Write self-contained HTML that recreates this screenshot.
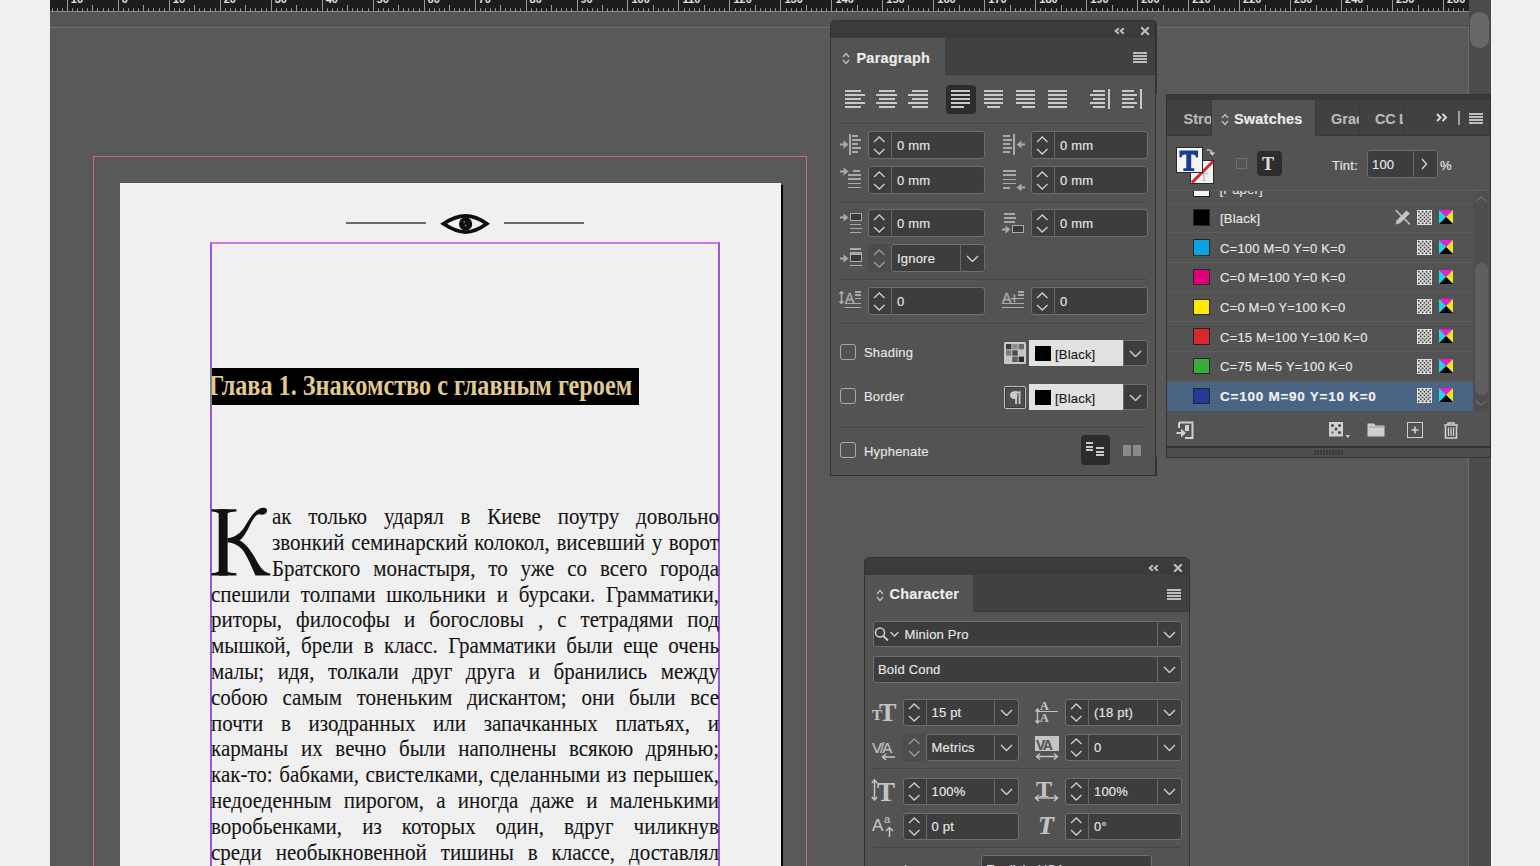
<!DOCTYPE html><html><head><meta charset="utf-8"><style>
*{box-sizing:border-box}
html,body{margin:0;padding:0}
body{width:1540px;height:866px;overflow:hidden;position:relative;background:#f0f0f0;font-family:"Liberation Sans",sans-serif;}
.a{position:absolute}
.fld{position:absolute;background:#3d3d3d;border:1px solid #6e6e6e;border-radius:3px}
.txt{position:absolute;color:#e6e6e6;font-size:12px;white-space:nowrap;line-height:1;letter-spacing:0.2px;-webkit-text-stroke:0.15px currentColor}
.sep{position:absolute;height:1px;background:#474747}
.bl{position:absolute;left:0;width:508px;font-family:"Liberation Serif",serif;font-size:21px;line-height:26px;color:#151515;text-align:justify;text-align-last:justify;white-space:nowrap;height:26px;transform-origin:0 20.08px;transform:scaleY(1.06);-webkit-text-stroke:0.1px #151515}
</style></head><body>
<div class="a" style="left:50px;top:0;width:1419px;height:12px;background:#1d1d1d;overflow:hidden">
<svg width="1419" height="12" style="position:absolute;left:0;top:0"><rect x="0" y="11" width="1419" height="1" fill="#8c8c8c"/><rect x="2" y="8.3" width="1" height="2.7" fill="#9a9a9a"/><rect x="7" y="8.3" width="1" height="2.7" fill="#9a9a9a"/><rect x="12" y="8.3" width="1" height="2.7" fill="#9a9a9a"/><rect x="17" y="0" width="1" height="11" fill="#9a9a9a"/><rect x="22" y="8.3" width="1" height="2.7" fill="#9a9a9a"/><rect x="27" y="8.3" width="1" height="2.7" fill="#9a9a9a"/><rect x="32" y="8.3" width="1" height="2.7" fill="#9a9a9a"/><rect x="37" y="8.3" width="1" height="2.7" fill="#9a9a9a"/><rect x="42" y="5" width="1" height="6" fill="#9a9a9a"/><rect x="47" y="8.3" width="1" height="2.7" fill="#9a9a9a"/><rect x="53" y="8.3" width="1" height="2.7" fill="#9a9a9a"/><rect x="58" y="8.3" width="1" height="2.7" fill="#9a9a9a"/><rect x="63" y="8.3" width="1" height="2.7" fill="#9a9a9a"/><rect x="68" y="0" width="1" height="11" fill="#9a9a9a"/><rect x="73" y="8.3" width="1" height="2.7" fill="#9a9a9a"/><rect x="78" y="8.3" width="1" height="2.7" fill="#9a9a9a"/><rect x="83" y="8.3" width="1" height="2.7" fill="#9a9a9a"/><rect x="88" y="8.3" width="1" height="2.7" fill="#9a9a9a"/><rect x="93" y="5" width="1" height="6" fill="#9a9a9a"/><rect x="98" y="8.3" width="1" height="2.7" fill="#9a9a9a"/><rect x="103" y="8.3" width="1" height="2.7" fill="#9a9a9a"/><rect x="109" y="8.3" width="1" height="2.7" fill="#9a9a9a"/><rect x="114" y="8.3" width="1" height="2.7" fill="#9a9a9a"/><rect x="119" y="0" width="1" height="11" fill="#9a9a9a"/><rect x="124" y="8.3" width="1" height="2.7" fill="#9a9a9a"/><rect x="129" y="8.3" width="1" height="2.7" fill="#9a9a9a"/><rect x="134" y="8.3" width="1" height="2.7" fill="#9a9a9a"/><rect x="139" y="8.3" width="1" height="2.7" fill="#9a9a9a"/><rect x="144" y="5" width="1" height="6" fill="#9a9a9a"/><rect x="149" y="8.3" width="1" height="2.7" fill="#9a9a9a"/><rect x="154" y="8.3" width="1" height="2.7" fill="#9a9a9a"/><rect x="160" y="8.3" width="1" height="2.7" fill="#9a9a9a"/><rect x="165" y="8.3" width="1" height="2.7" fill="#9a9a9a"/><rect x="170" y="0" width="1" height="11" fill="#9a9a9a"/><rect x="175" y="8.3" width="1" height="2.7" fill="#9a9a9a"/><rect x="180" y="8.3" width="1" height="2.7" fill="#9a9a9a"/><rect x="185" y="8.3" width="1" height="2.7" fill="#9a9a9a"/><rect x="190" y="8.3" width="1" height="2.7" fill="#9a9a9a"/><rect x="195" y="5" width="1" height="6" fill="#9a9a9a"/><rect x="200" y="8.3" width="1" height="2.7" fill="#9a9a9a"/><rect x="205" y="8.3" width="1" height="2.7" fill="#9a9a9a"/><rect x="211" y="8.3" width="1" height="2.7" fill="#9a9a9a"/><rect x="216" y="8.3" width="1" height="2.7" fill="#9a9a9a"/><rect x="221" y="0" width="1" height="11" fill="#9a9a9a"/><rect x="226" y="8.3" width="1" height="2.7" fill="#9a9a9a"/><rect x="231" y="8.3" width="1" height="2.7" fill="#9a9a9a"/><rect x="236" y="8.3" width="1" height="2.7" fill="#9a9a9a"/><rect x="241" y="8.3" width="1" height="2.7" fill="#9a9a9a"/><rect x="246" y="5" width="1" height="6" fill="#9a9a9a"/><rect x="251" y="8.3" width="1" height="2.7" fill="#9a9a9a"/><rect x="256" y="8.3" width="1" height="2.7" fill="#9a9a9a"/><rect x="261" y="8.3" width="1" height="2.7" fill="#9a9a9a"/><rect x="267" y="8.3" width="1" height="2.7" fill="#9a9a9a"/><rect x="272" y="0" width="1" height="11" fill="#9a9a9a"/><rect x="277" y="8.3" width="1" height="2.7" fill="#9a9a9a"/><rect x="282" y="8.3" width="1" height="2.7" fill="#9a9a9a"/><rect x="287" y="8.3" width="1" height="2.7" fill="#9a9a9a"/><rect x="292" y="8.3" width="1" height="2.7" fill="#9a9a9a"/><rect x="297" y="5" width="1" height="6" fill="#9a9a9a"/><rect x="302" y="8.3" width="1" height="2.7" fill="#9a9a9a"/><rect x="307" y="8.3" width="1" height="2.7" fill="#9a9a9a"/><rect x="312" y="8.3" width="1" height="2.7" fill="#9a9a9a"/><rect x="318" y="8.3" width="1" height="2.7" fill="#9a9a9a"/><rect x="323" y="0" width="1" height="11" fill="#9a9a9a"/><rect x="328" y="8.3" width="1" height="2.7" fill="#9a9a9a"/><rect x="333" y="8.3" width="1" height="2.7" fill="#9a9a9a"/><rect x="338" y="8.3" width="1" height="2.7" fill="#9a9a9a"/><rect x="343" y="8.3" width="1" height="2.7" fill="#9a9a9a"/><rect x="348" y="5" width="1" height="6" fill="#9a9a9a"/><rect x="353" y="8.3" width="1" height="2.7" fill="#9a9a9a"/><rect x="358" y="8.3" width="1" height="2.7" fill="#9a9a9a"/><rect x="363" y="8.3" width="1" height="2.7" fill="#9a9a9a"/><rect x="369" y="8.3" width="1" height="2.7" fill="#9a9a9a"/><rect x="374" y="0" width="1" height="11" fill="#9a9a9a"/><rect x="379" y="8.3" width="1" height="2.7" fill="#9a9a9a"/><rect x="384" y="8.3" width="1" height="2.7" fill="#9a9a9a"/><rect x="389" y="8.3" width="1" height="2.7" fill="#9a9a9a"/><rect x="394" y="8.3" width="1" height="2.7" fill="#9a9a9a"/><rect x="399" y="5" width="1" height="6" fill="#9a9a9a"/><rect x="404" y="8.3" width="1" height="2.7" fill="#9a9a9a"/><rect x="409" y="8.3" width="1" height="2.7" fill="#9a9a9a"/><rect x="414" y="8.3" width="1" height="2.7" fill="#9a9a9a"/><rect x="419" y="8.3" width="1" height="2.7" fill="#9a9a9a"/><rect x="425" y="0" width="1" height="11" fill="#9a9a9a"/><rect x="430" y="8.3" width="1" height="2.7" fill="#9a9a9a"/><rect x="435" y="8.3" width="1" height="2.7" fill="#9a9a9a"/><rect x="440" y="8.3" width="1" height="2.7" fill="#9a9a9a"/><rect x="445" y="8.3" width="1" height="2.7" fill="#9a9a9a"/><rect x="450" y="5" width="1" height="6" fill="#9a9a9a"/><rect x="455" y="8.3" width="1" height="2.7" fill="#9a9a9a"/><rect x="460" y="8.3" width="1" height="2.7" fill="#9a9a9a"/><rect x="465" y="8.3" width="1" height="2.7" fill="#9a9a9a"/><rect x="470" y="8.3" width="1" height="2.7" fill="#9a9a9a"/><rect x="476" y="0" width="1" height="11" fill="#9a9a9a"/><rect x="481" y="8.3" width="1" height="2.7" fill="#9a9a9a"/><rect x="486" y="8.3" width="1" height="2.7" fill="#9a9a9a"/><rect x="491" y="8.3" width="1" height="2.7" fill="#9a9a9a"/><rect x="496" y="8.3" width="1" height="2.7" fill="#9a9a9a"/><rect x="501" y="5" width="1" height="6" fill="#9a9a9a"/><rect x="506" y="8.3" width="1" height="2.7" fill="#9a9a9a"/><rect x="511" y="8.3" width="1" height="2.7" fill="#9a9a9a"/><rect x="516" y="8.3" width="1" height="2.7" fill="#9a9a9a"/><rect x="521" y="8.3" width="1" height="2.7" fill="#9a9a9a"/><rect x="527" y="0" width="1" height="11" fill="#9a9a9a"/><rect x="532" y="8.3" width="1" height="2.7" fill="#9a9a9a"/><rect x="537" y="8.3" width="1" height="2.7" fill="#9a9a9a"/><rect x="542" y="8.3" width="1" height="2.7" fill="#9a9a9a"/><rect x="547" y="8.3" width="1" height="2.7" fill="#9a9a9a"/><rect x="552" y="5" width="1" height="6" fill="#9a9a9a"/><rect x="557" y="8.3" width="1" height="2.7" fill="#9a9a9a"/><rect x="562" y="8.3" width="1" height="2.7" fill="#9a9a9a"/><rect x="567" y="8.3" width="1" height="2.7" fill="#9a9a9a"/><rect x="572" y="8.3" width="1" height="2.7" fill="#9a9a9a"/><rect x="577" y="0" width="1" height="11" fill="#9a9a9a"/><rect x="583" y="8.3" width="1" height="2.7" fill="#9a9a9a"/><rect x="588" y="8.3" width="1" height="2.7" fill="#9a9a9a"/><rect x="593" y="8.3" width="1" height="2.7" fill="#9a9a9a"/><rect x="598" y="8.3" width="1" height="2.7" fill="#9a9a9a"/><rect x="603" y="5" width="1" height="6" fill="#9a9a9a"/><rect x="608" y="8.3" width="1" height="2.7" fill="#9a9a9a"/><rect x="613" y="8.3" width="1" height="2.7" fill="#9a9a9a"/><rect x="618" y="8.3" width="1" height="2.7" fill="#9a9a9a"/><rect x="623" y="8.3" width="1" height="2.7" fill="#9a9a9a"/><rect x="628" y="0" width="1" height="11" fill="#9a9a9a"/><rect x="634" y="8.3" width="1" height="2.7" fill="#9a9a9a"/><rect x="639" y="8.3" width="1" height="2.7" fill="#9a9a9a"/><rect x="644" y="8.3" width="1" height="2.7" fill="#9a9a9a"/><rect x="649" y="8.3" width="1" height="2.7" fill="#9a9a9a"/><rect x="654" y="5" width="1" height="6" fill="#9a9a9a"/><rect x="659" y="8.3" width="1" height="2.7" fill="#9a9a9a"/><rect x="664" y="8.3" width="1" height="2.7" fill="#9a9a9a"/><rect x="669" y="8.3" width="1" height="2.7" fill="#9a9a9a"/><rect x="674" y="8.3" width="1" height="2.7" fill="#9a9a9a"/><rect x="679" y="0" width="1" height="11" fill="#9a9a9a"/><rect x="685" y="8.3" width="1" height="2.7" fill="#9a9a9a"/><rect x="690" y="8.3" width="1" height="2.7" fill="#9a9a9a"/><rect x="695" y="8.3" width="1" height="2.7" fill="#9a9a9a"/><rect x="700" y="8.3" width="1" height="2.7" fill="#9a9a9a"/><rect x="705" y="5" width="1" height="6" fill="#9a9a9a"/><rect x="710" y="8.3" width="1" height="2.7" fill="#9a9a9a"/><rect x="715" y="8.3" width="1" height="2.7" fill="#9a9a9a"/><rect x="720" y="8.3" width="1" height="2.7" fill="#9a9a9a"/><rect x="725" y="8.3" width="1" height="2.7" fill="#9a9a9a"/><rect x="730" y="0" width="1" height="11" fill="#9a9a9a"/><rect x="736" y="8.3" width="1" height="2.7" fill="#9a9a9a"/><rect x="741" y="8.3" width="1" height="2.7" fill="#9a9a9a"/><rect x="746" y="8.3" width="1" height="2.7" fill="#9a9a9a"/><rect x="751" y="8.3" width="1" height="2.7" fill="#9a9a9a"/><rect x="756" y="5" width="1" height="6" fill="#9a9a9a"/><rect x="761" y="8.3" width="1" height="2.7" fill="#9a9a9a"/><rect x="766" y="8.3" width="1" height="2.7" fill="#9a9a9a"/><rect x="771" y="8.3" width="1" height="2.7" fill="#9a9a9a"/><rect x="776" y="8.3" width="1" height="2.7" fill="#9a9a9a"/><rect x="781" y="0" width="1" height="11" fill="#9a9a9a"/><rect x="786" y="8.3" width="1" height="2.7" fill="#9a9a9a"/><rect x="792" y="8.3" width="1" height="2.7" fill="#9a9a9a"/><rect x="797" y="8.3" width="1" height="2.7" fill="#9a9a9a"/><rect x="802" y="8.3" width="1" height="2.7" fill="#9a9a9a"/><rect x="807" y="5" width="1" height="6" fill="#9a9a9a"/><rect x="812" y="8.3" width="1" height="2.7" fill="#9a9a9a"/><rect x="817" y="8.3" width="1" height="2.7" fill="#9a9a9a"/><rect x="822" y="8.3" width="1" height="2.7" fill="#9a9a9a"/><rect x="827" y="8.3" width="1" height="2.7" fill="#9a9a9a"/><rect x="832" y="0" width="1" height="11" fill="#9a9a9a"/><rect x="837" y="8.3" width="1" height="2.7" fill="#9a9a9a"/><rect x="843" y="8.3" width="1" height="2.7" fill="#9a9a9a"/><rect x="848" y="8.3" width="1" height="2.7" fill="#9a9a9a"/><rect x="853" y="8.3" width="1" height="2.7" fill="#9a9a9a"/><rect x="858" y="5" width="1" height="6" fill="#9a9a9a"/><rect x="863" y="8.3" width="1" height="2.7" fill="#9a9a9a"/><rect x="868" y="8.3" width="1" height="2.7" fill="#9a9a9a"/><rect x="873" y="8.3" width="1" height="2.7" fill="#9a9a9a"/><rect x="878" y="8.3" width="1" height="2.7" fill="#9a9a9a"/><rect x="883" y="0" width="1" height="11" fill="#9a9a9a"/><rect x="888" y="8.3" width="1" height="2.7" fill="#9a9a9a"/><rect x="894" y="8.3" width="1" height="2.7" fill="#9a9a9a"/><rect x="899" y="8.3" width="1" height="2.7" fill="#9a9a9a"/><rect x="904" y="8.3" width="1" height="2.7" fill="#9a9a9a"/><rect x="909" y="5" width="1" height="6" fill="#9a9a9a"/><rect x="914" y="8.3" width="1" height="2.7" fill="#9a9a9a"/><rect x="919" y="8.3" width="1" height="2.7" fill="#9a9a9a"/><rect x="924" y="8.3" width="1" height="2.7" fill="#9a9a9a"/><rect x="929" y="8.3" width="1" height="2.7" fill="#9a9a9a"/><rect x="934" y="0" width="1" height="11" fill="#9a9a9a"/><rect x="939" y="8.3" width="1" height="2.7" fill="#9a9a9a"/><rect x="944" y="8.3" width="1" height="2.7" fill="#9a9a9a"/><rect x="950" y="8.3" width="1" height="2.7" fill="#9a9a9a"/><rect x="955" y="8.3" width="1" height="2.7" fill="#9a9a9a"/><rect x="960" y="5" width="1" height="6" fill="#9a9a9a"/><rect x="965" y="8.3" width="1" height="2.7" fill="#9a9a9a"/><rect x="970" y="8.3" width="1" height="2.7" fill="#9a9a9a"/><rect x="975" y="8.3" width="1" height="2.7" fill="#9a9a9a"/><rect x="980" y="8.3" width="1" height="2.7" fill="#9a9a9a"/><rect x="985" y="0" width="1" height="11" fill="#9a9a9a"/><rect x="990" y="8.3" width="1" height="2.7" fill="#9a9a9a"/><rect x="995" y="8.3" width="1" height="2.7" fill="#9a9a9a"/><rect x="1001" y="8.3" width="1" height="2.7" fill="#9a9a9a"/><rect x="1006" y="8.3" width="1" height="2.7" fill="#9a9a9a"/><rect x="1011" y="5" width="1" height="6" fill="#9a9a9a"/><rect x="1016" y="8.3" width="1" height="2.7" fill="#9a9a9a"/><rect x="1021" y="8.3" width="1" height="2.7" fill="#9a9a9a"/><rect x="1026" y="8.3" width="1" height="2.7" fill="#9a9a9a"/><rect x="1031" y="8.3" width="1" height="2.7" fill="#9a9a9a"/><rect x="1036" y="0" width="1" height="11" fill="#9a9a9a"/><rect x="1041" y="8.3" width="1" height="2.7" fill="#9a9a9a"/><rect x="1046" y="8.3" width="1" height="2.7" fill="#9a9a9a"/><rect x="1052" y="8.3" width="1" height="2.7" fill="#9a9a9a"/><rect x="1057" y="8.3" width="1" height="2.7" fill="#9a9a9a"/><rect x="1062" y="5" width="1" height="6" fill="#9a9a9a"/><rect x="1067" y="8.3" width="1" height="2.7" fill="#9a9a9a"/><rect x="1072" y="8.3" width="1" height="2.7" fill="#9a9a9a"/><rect x="1077" y="8.3" width="1" height="2.7" fill="#9a9a9a"/><rect x="1082" y="8.3" width="1" height="2.7" fill="#9a9a9a"/><rect x="1087" y="0" width="1" height="11" fill="#9a9a9a"/><rect x="1092" y="8.3" width="1" height="2.7" fill="#9a9a9a"/><rect x="1097" y="8.3" width="1" height="2.7" fill="#9a9a9a"/><rect x="1102" y="8.3" width="1" height="2.7" fill="#9a9a9a"/><rect x="1108" y="8.3" width="1" height="2.7" fill="#9a9a9a"/><rect x="1113" y="5" width="1" height="6" fill="#9a9a9a"/><rect x="1118" y="8.3" width="1" height="2.7" fill="#9a9a9a"/><rect x="1123" y="8.3" width="1" height="2.7" fill="#9a9a9a"/><rect x="1128" y="8.3" width="1" height="2.7" fill="#9a9a9a"/><rect x="1133" y="8.3" width="1" height="2.7" fill="#9a9a9a"/><rect x="1138" y="0" width="1" height="11" fill="#9a9a9a"/><rect x="1143" y="8.3" width="1" height="2.7" fill="#9a9a9a"/><rect x="1148" y="8.3" width="1" height="2.7" fill="#9a9a9a"/><rect x="1153" y="8.3" width="1" height="2.7" fill="#9a9a9a"/><rect x="1159" y="8.3" width="1" height="2.7" fill="#9a9a9a"/><rect x="1164" y="5" width="1" height="6" fill="#9a9a9a"/><rect x="1169" y="8.3" width="1" height="2.7" fill="#9a9a9a"/><rect x="1174" y="8.3" width="1" height="2.7" fill="#9a9a9a"/><rect x="1179" y="8.3" width="1" height="2.7" fill="#9a9a9a"/><rect x="1184" y="8.3" width="1" height="2.7" fill="#9a9a9a"/><rect x="1189" y="0" width="1" height="11" fill="#9a9a9a"/><rect x="1194" y="8.3" width="1" height="2.7" fill="#9a9a9a"/><rect x="1199" y="8.3" width="1" height="2.7" fill="#9a9a9a"/><rect x="1204" y="8.3" width="1" height="2.7" fill="#9a9a9a"/><rect x="1210" y="8.3" width="1" height="2.7" fill="#9a9a9a"/><rect x="1215" y="5" width="1" height="6" fill="#9a9a9a"/><rect x="1220" y="8.3" width="1" height="2.7" fill="#9a9a9a"/><rect x="1225" y="8.3" width="1" height="2.7" fill="#9a9a9a"/><rect x="1230" y="8.3" width="1" height="2.7" fill="#9a9a9a"/><rect x="1235" y="8.3" width="1" height="2.7" fill="#9a9a9a"/><rect x="1240" y="0" width="1" height="11" fill="#9a9a9a"/><rect x="1245" y="8.3" width="1" height="2.7" fill="#9a9a9a"/><rect x="1250" y="8.3" width="1" height="2.7" fill="#9a9a9a"/><rect x="1255" y="8.3" width="1" height="2.7" fill="#9a9a9a"/><rect x="1260" y="8.3" width="1" height="2.7" fill="#9a9a9a"/><rect x="1266" y="5" width="1" height="6" fill="#9a9a9a"/><rect x="1271" y="8.3" width="1" height="2.7" fill="#9a9a9a"/><rect x="1276" y="8.3" width="1" height="2.7" fill="#9a9a9a"/><rect x="1281" y="8.3" width="1" height="2.7" fill="#9a9a9a"/><rect x="1286" y="8.3" width="1" height="2.7" fill="#9a9a9a"/><rect x="1291" y="0" width="1" height="11" fill="#9a9a9a"/><rect x="1296" y="8.3" width="1" height="2.7" fill="#9a9a9a"/><rect x="1301" y="8.3" width="1" height="2.7" fill="#9a9a9a"/><rect x="1306" y="8.3" width="1" height="2.7" fill="#9a9a9a"/><rect x="1311" y="8.3" width="1" height="2.7" fill="#9a9a9a"/><rect x="1317" y="5" width="1" height="6" fill="#9a9a9a"/><rect x="1322" y="8.3" width="1" height="2.7" fill="#9a9a9a"/><rect x="1327" y="8.3" width="1" height="2.7" fill="#9a9a9a"/><rect x="1332" y="8.3" width="1" height="2.7" fill="#9a9a9a"/><rect x="1337" y="8.3" width="1" height="2.7" fill="#9a9a9a"/><rect x="1342" y="0" width="1" height="11" fill="#9a9a9a"/><rect x="1347" y="8.3" width="1" height="2.7" fill="#9a9a9a"/><rect x="1352" y="8.3" width="1" height="2.7" fill="#9a9a9a"/><rect x="1357" y="8.3" width="1" height="2.7" fill="#9a9a9a"/><rect x="1362" y="8.3" width="1" height="2.7" fill="#9a9a9a"/><rect x="1368" y="5" width="1" height="6" fill="#9a9a9a"/><rect x="1373" y="8.3" width="1" height="2.7" fill="#9a9a9a"/><rect x="1378" y="8.3" width="1" height="2.7" fill="#9a9a9a"/><rect x="1383" y="8.3" width="1" height="2.7" fill="#9a9a9a"/><rect x="1388" y="8.3" width="1" height="2.7" fill="#9a9a9a"/><rect x="1393" y="0" width="1" height="11" fill="#9a9a9a"/><rect x="1398" y="8.3" width="1" height="2.7" fill="#9a9a9a"/><rect x="1403" y="8.3" width="1" height="2.7" fill="#9a9a9a"/><rect x="1408" y="8.3" width="1" height="2.7" fill="#9a9a9a"/><rect x="1413" y="8.3" width="1" height="2.7" fill="#9a9a9a"/><rect x="1419" y="5" width="1" height="6" fill="#9a9a9a"/></svg>
<div class="a" style="left:20.8px;top:-6.5px;font-size:11px;font-weight:bold;color:#e0e0e0;line-height:10px">10</div>
<div class="a" style="left:71.8px;top:-6.5px;font-size:11px;font-weight:bold;color:#e0e0e0;line-height:10px">0</div>
<div class="a" style="left:122.8px;top:-6.5px;font-size:11px;font-weight:bold;color:#e0e0e0;line-height:10px">10</div>
<div class="a" style="left:173.7px;top:-6.5px;font-size:11px;font-weight:bold;color:#e0e0e0;line-height:10px">20</div>
<div class="a" style="left:224.7px;top:-6.5px;font-size:11px;font-weight:bold;color:#e0e0e0;line-height:10px">30</div>
<div class="a" style="left:275.7px;top:-6.5px;font-size:11px;font-weight:bold;color:#e0e0e0;line-height:10px">40</div>
<div class="a" style="left:326.6px;top:-6.5px;font-size:11px;font-weight:bold;color:#e0e0e0;line-height:10px">50</div>
<div class="a" style="left:377.6px;top:-6.5px;font-size:11px;font-weight:bold;color:#e0e0e0;line-height:10px">60</div>
<div class="a" style="left:428.6px;top:-6.5px;font-size:11px;font-weight:bold;color:#e0e0e0;line-height:10px">70</div>
<div class="a" style="left:479.6px;top:-6.5px;font-size:11px;font-weight:bold;color:#e0e0e0;line-height:10px">80</div>
<div class="a" style="left:530.5px;top:-6.5px;font-size:11px;font-weight:bold;color:#e0e0e0;line-height:10px">90</div>
<div class="a" style="left:581.5px;top:-6.5px;font-size:11px;font-weight:bold;color:#e0e0e0;line-height:10px">100</div>
<div class="a" style="left:632.5px;top:-6.5px;font-size:11px;font-weight:bold;color:#e0e0e0;line-height:10px">110</div>
<div class="a" style="left:683.4px;top:-6.5px;font-size:11px;font-weight:bold;color:#e0e0e0;line-height:10px">120</div>
<div class="a" style="left:734.4px;top:-6.5px;font-size:11px;font-weight:bold;color:#e0e0e0;line-height:10px">130</div>
<div class="a" style="left:785.4px;top:-6.5px;font-size:11px;font-weight:bold;color:#e0e0e0;line-height:10px">140</div>
<div class="a" style="left:836.3px;top:-6.5px;font-size:11px;font-weight:bold;color:#e0e0e0;line-height:10px">150</div>
<div class="a" style="left:887.3px;top:-6.5px;font-size:11px;font-weight:bold;color:#e0e0e0;line-height:10px">160</div>
<div class="a" style="left:938.3px;top:-6.5px;font-size:11px;font-weight:bold;color:#e0e0e0;line-height:10px">170</div>
<div class="a" style="left:989.3px;top:-6.5px;font-size:11px;font-weight:bold;color:#e0e0e0;line-height:10px">180</div>
<div class="a" style="left:1040.2px;top:-6.5px;font-size:11px;font-weight:bold;color:#e0e0e0;line-height:10px">190</div>
<div class="a" style="left:1091.2px;top:-6.5px;font-size:11px;font-weight:bold;color:#e0e0e0;line-height:10px">200</div>
<div class="a" style="left:1142.2px;top:-6.5px;font-size:11px;font-weight:bold;color:#e0e0e0;line-height:10px">210</div>
<div class="a" style="left:1193.1px;top:-6.5px;font-size:11px;font-weight:bold;color:#e0e0e0;line-height:10px">220</div>
<div class="a" style="left:1244.1px;top:-6.5px;font-size:11px;font-weight:bold;color:#e0e0e0;line-height:10px">230</div>
<div class="a" style="left:1295.1px;top:-6.5px;font-size:11px;font-weight:bold;color:#e0e0e0;line-height:10px">240</div>
<div class="a" style="left:1346.0px;top:-6.5px;font-size:11px;font-weight:bold;color:#e0e0e0;line-height:10px">250</div>
<div class="a" style="left:1397.0px;top:-6.5px;font-size:11px;font-weight:bold;color:#e0e0e0;line-height:10px">260</div>
</div>
<div class="a" style="left:50px;top:12px;width:1419px;height:854px;background:#595959"></div>
<div class="a" style="left:50px;top:12px;width:1419px;height:15px;background:#555555"></div>
<div class="a" style="left:50px;top:27px;width:1419px;height:1px;background:#6c6c6c"></div>
<div class="a" style="left:1468px;top:27px;width:1px;height:839px;background:#6c6c6c"></div>
<div class="a" style="left:1469px;top:0;width:22px;height:866px;background:#4b4b4b"></div>
<div class="a" style="left:1470px;top:12px;width:19px;height:36px;background:#676767;border-radius:9px"></div>
<div class="a" style="left:93px;top:156px;width:714px;height:720px;border:1px solid #d06874"></div>
<div class="a" style="left:781px;top:185px;width:2px;height:700px;background:#000"></div>
<div class="a" style="left:120px;top:183px;width:661px;height:700px;background:#f0f0f0"></div>
<div class="a" style="left:346px;top:222px;width:80px;height:2px;background:#6a6a6a"></div>
<div class="a" style="left:504px;top:222px;width:80px;height:2px;background:#6a6a6a"></div>
<svg class="a" style="left:440px;top:212px" width="50" height="24" viewBox="0 0 50 24">
<path d="M3.5 11.8 C12 6.2 18 3.9 25.6 3.9 C33 3.9 39 6.2 46.8 11.8 C39 17.4 33 20.1 25.6 20.1 C18 20.1 12 17.4 3.5 11.8 Z" fill="none" stroke="#0d0d12" stroke-width="3.7" stroke-linejoin="miter"/>
<circle cx="25.6" cy="11.9" r="6.6" fill="#0d0d12"/><circle cx="24.2" cy="9.8" r="0.9" fill="#8a8a8a"/><circle cx="25.6" cy="13.5" r="0.9" fill="#8a8a8a"/>
</svg>
<div class="a" style="left:210px;top:242px;width:510px;height:700px;border:2px solid #9c58d2;border-top-color:#cf72e2"></div>
<div class="a" style="left:211px;top:368px;width:428px;height:37px;background:#000;overflow:hidden">
<div class="a" style="left:0;top:0;width:1px;height:37px;background:#5aa83c;z-index:2"></div>
<div class="a" style="left:-2.5px;top:-1.5px;height:37px;line-height:37px;font-family:'Liberation Serif',serif;font-weight:bold;font-size:29px;color:#e0ca8e;white-space:nowrap;transform-origin:0 50%;transform:scaleX(0.835)" id="hd">Глава 1. Знакомство с главным героем</div>
</div>
<div class="a" style="left:211px;top:0;width:508px;height:866px;overflow:hidden">
<div class="bl" style="top:504.10px;left:61px;width:447px">ак только ударял в Киеве поутру довольно</div>
<div class="bl" style="top:529.90px;left:61px;width:447px">звонкий семинарский колокол, висевший у ворот</div>
<div class="bl" style="top:555.70px;left:61px;width:447px">Братского монастыря, то уже со всего города</div>
<div class="bl" style="top:581.50px">спешили толпами школьники и бурсаки. Грамматики,</div>
<div class="bl" style="top:607.30px">риторы, философы и богословы , с тетрадями под</div>
<div class="bl" style="top:633.10px">мышкой, брели в класс. Грамматики были еще очень</div>
<div class="bl" style="top:658.90px">малы; идя, толкали друг друга и бранились между</div>
<div class="bl" style="top:684.70px">собою самым тоненьким дискантом; они были все</div>
<div class="bl" style="top:710.50px">почти в изодранных или запачканных платьях, и</div>
<div class="bl" style="top:736.30px">карманы их вечно были наполнены всякою дрянью;</div>
<div class="bl" style="top:762.10px">как-то: бабками, свистелками, сделанными из перышек,</div>
<div class="bl" style="top:787.90px">недоеденным пирогом, а иногда даже и маленькими</div>
<div class="bl" style="top:813.70px">воробьенками, из которых один, вдруг чиликнув</div>
<div class="bl" style="top:839.50px">среди необыкновенной тишины в классе, доставлял</div>
<svg class="a" style="left:-6px;top:500px" width="80" height="80" viewBox="0 0 80 80"><g fill="#111"><rect x="13.7" y="9.3" width="8.9" height="66.3"/><path d="M6.4 9.3 H31.4 V11.6 Q25 11.8 22.6 13.3 H13.7 Q11 11.8 6.4 11.6 Z"/><path d="M6.4 75.6 H31.4 V73.3 Q25 73.1 22.6 71.6 H13.7 Q11 73.1 6.4 73.3 Z"/><path d="M32.4 39.3 C38 41 44 48 49 56 C54 65 57 72 65.3 73.6 L65.3 75.6 L50.5 75.6 C47 68 43 58 38.5 51 C34.5 45.5 28 42.5 22.6 42.2 L22.6 38.2 C27 38.2 30 38.6 32.4 39.3 Z"/><path d="M22.6 38.2 C30 37.5 35.5 33 39.5 27 C44 20 48 12 54 9 C57 7.3 62.5 7.2 62 11 C61.5 14.5 57.5 15.3 54.5 14.3 C51 14 48 19 44 27 C40 35 36 40.8 32.4 41.5 L22.6 42.2 Z"/></g></svg>
</div>
<div class="a" style="left:830px;top:20px;width:327px;height:456px;background:#535353;border:1px solid #333;border-right:2px solid #333;border-radius:5px 5px 0 0"></div>
<div class="a" style="left:831px;top:21px;width:324px;height:17px;background:#3b3b3b;border-radius:4px 4px 0 0"></div>
<div class="a" style="left:831px;top:38px;width:324px;height:37px;background:#414141;border-bottom:1px solid #393939"></div>
<div class="a" style="left:831px;top:38px;width:114px;height:38px;background:#535353"></div>
<svg class="a" style="left:1114px;top:27px" width="11" height="8"><path d="M4.8 1.2 L1.6 4 L4.8 6.8 M9.8 1.2 L6.6 4 L9.8 6.8" fill="none" stroke="#bcbcbc" stroke-width="2"/></svg><svg class="a" style="left:1140px;top:26px" width="10" height="10"><path d="M1.2 1.2 L8.8 8.8 M8.8 1.2 L1.2 8.8" fill="none" stroke="#bcbcbc" stroke-width="2.2"/></svg>
<svg class="a" style="left:842px;top:52px" width="8" height="13"><path d="M1 5 L4 1.5 L7 5 M1 8 L4 11.5 L7 8" fill="none" stroke="#bdbdbd" stroke-width="1.4"/></svg>
<div class="txt" style="left:856.5px;top:50.9px;font-size:14.5px;letter-spacing:0.2px;font-weight:bold;color:#ececec">Paragraph</div>
<div class="a" style="left:1133px;top:52px;width:14px;height:1.6px;background:#bdbdbd"></div><div class="a" style="left:1133px;top:55px;width:14px;height:1.6px;background:#bdbdbd"></div><div class="a" style="left:1133px;top:58px;width:14px;height:1.6px;background:#bdbdbd"></div><div class="a" style="left:1133px;top:61px;width:14px;height:1.6px;background:#bdbdbd"></div>
<div class="a" style="left:845px;top:90px;width:16px;height:2px;background:#c9c9c9"></div><div class="a" style="left:845px;top:94px;width:20px;height:2px;background:#c9c9c9"></div><div class="a" style="left:845px;top:98px;width:16px;height:2px;background:#c9c9c9"></div><div class="a" style="left:845px;top:102px;width:20px;height:2px;background:#c9c9c9"></div><div class="a" style="left:845px;top:106px;width:16px;height:2px;background:#c9c9c9"></div>
<div class="a" style="left:879px;top:90px;width:16px;height:2px;background:#c9c9c9"></div><div class="a" style="left:876px;top:94px;width:21px;height:2px;background:#c9c9c9"></div><div class="a" style="left:879px;top:98px;width:16px;height:2px;background:#c9c9c9"></div><div class="a" style="left:876px;top:102px;width:21px;height:2px;background:#c9c9c9"></div><div class="a" style="left:879px;top:106px;width:16px;height:2px;background:#c9c9c9"></div>
<div class="a" style="left:912px;top:90px;width:16px;height:2px;background:#c9c9c9"></div><div class="a" style="left:908px;top:94px;width:20px;height:2px;background:#c9c9c9"></div><div class="a" style="left:912px;top:98px;width:16px;height:2px;background:#c9c9c9"></div><div class="a" style="left:908px;top:102px;width:20px;height:2px;background:#c9c9c9"></div><div class="a" style="left:912px;top:106px;width:16px;height:2px;background:#c9c9c9"></div>
<div class="a" style="left:946px;top:85px;width:30px;height:29px;background:#2c2c2c;border-radius:4px"></div>
<div class="a" style="left:951px;top:90px;width:19px;height:2px;background:#c9c9c9"></div><div class="a" style="left:951px;top:94px;width:19px;height:2px;background:#c9c9c9"></div><div class="a" style="left:951px;top:98px;width:19px;height:2px;background:#c9c9c9"></div><div class="a" style="left:951px;top:102px;width:19px;height:2px;background:#c9c9c9"></div><div class="a" style="left:951px;top:106px;width:13px;height:2px;background:#c9c9c9"></div>
<div class="a" style="left:984px;top:90px;width:19px;height:2px;background:#c9c9c9"></div><div class="a" style="left:984px;top:94px;width:19px;height:2px;background:#c9c9c9"></div><div class="a" style="left:984px;top:98px;width:19px;height:2px;background:#c9c9c9"></div><div class="a" style="left:984px;top:102px;width:19px;height:2px;background:#c9c9c9"></div><div class="a" style="left:986.5px;top:106px;width:13.5px;height:2px;background:#c9c9c9"></div>
<div class="a" style="left:1016px;top:90px;width:19px;height:2px;background:#c9c9c9"></div><div class="a" style="left:1016px;top:94px;width:19px;height:2px;background:#c9c9c9"></div><div class="a" style="left:1016px;top:98px;width:19px;height:2px;background:#c9c9c9"></div><div class="a" style="left:1016px;top:102px;width:19px;height:2px;background:#c9c9c9"></div><div class="a" style="left:1021.5px;top:106px;width:13.5px;height:2px;background:#c9c9c9"></div>
<div class="a" style="left:1048px;top:90px;width:19px;height:2px;background:#c9c9c9"></div><div class="a" style="left:1048px;top:94px;width:19px;height:2px;background:#c9c9c9"></div><div class="a" style="left:1048px;top:98px;width:19px;height:2px;background:#c9c9c9"></div><div class="a" style="left:1048px;top:102px;width:19px;height:2px;background:#c9c9c9"></div><div class="a" style="left:1048px;top:106px;width:19px;height:2px;background:#c9c9c9"></div>
<div class="a" style="left:1093px;top:90px;width:12px;height:2px;background:#c9c9c9"></div><div class="a" style="left:1090px;top:94px;width:15px;height:2px;background:#c9c9c9"></div><div class="a" style="left:1093px;top:98px;width:12px;height:2px;background:#c9c9c9"></div><div class="a" style="left:1090px;top:102px;width:15px;height:2px;background:#c9c9c9"></div><div class="a" style="left:1093px;top:106px;width:12px;height:2px;background:#c9c9c9"></div>
<div class="a" style="left:1107.5px;top:88.5px;width:2px;height:20px;background:#c9c9c9"></div>
<div class="a" style="left:1122px;top:90px;width:12px;height:2px;background:#c9c9c9"></div><div class="a" style="left:1122px;top:94px;width:15px;height:2px;background:#c9c9c9"></div><div class="a" style="left:1122px;top:98px;width:12px;height:2px;background:#c9c9c9"></div><div class="a" style="left:1122px;top:102px;width:15px;height:2px;background:#c9c9c9"></div><div class="a" style="left:1122px;top:106px;width:12px;height:2px;background:#c9c9c9"></div>
<div class="a" style="left:1140px;top:88.5px;width:2px;height:20px;background:#c9c9c9"></div>
<div class="a" style="left:840px;top:123px;width:307px;height:1px;background:#474747"></div><div class="a" style="left:840px;top:124px;width:307px;height:1px;background:#575757"></div>
<div class="fld" style="left:868px;top:131px;width:117px;height:28px;background:#3d3d3d"></div>
<div class="a" style="left:891px;top:131px;width:1px;height:28px;background:#686868"></div>
<svg class="a" style="left:873px;top:135.5px" width="12.5" height="7"><path d="M1 6 L6.25 1 L11.5 6" fill="none" stroke="#cfcfcf" stroke-width="1.3"/></svg>
<svg class="a" style="left:873px;top:147.5px" width="12.5" height="7"><path d="M1 1 L6.25 6 L11.5 1" fill="none" stroke="#cfcfcf" stroke-width="1.3"/></svg>
<div class="txt" style="left:897px;top:138.6px;font-size:13px">0 mm</div>
<div class="fld" style="left:1031px;top:131px;width:117px;height:28px;background:#3d3d3d"></div>
<div class="a" style="left:1054px;top:131px;width:1px;height:28px;background:#686868"></div>
<svg class="a" style="left:1036px;top:135.5px" width="12.5" height="7"><path d="M1 6 L6.25 1 L11.5 6" fill="none" stroke="#cfcfcf" stroke-width="1.3"/></svg>
<svg class="a" style="left:1036px;top:147.5px" width="12.5" height="7"><path d="M1 1 L6.25 6 L11.5 1" fill="none" stroke="#cfcfcf" stroke-width="1.3"/></svg>
<div class="txt" style="left:1060px;top:138.6px;font-size:13px">0 mm</div>
<div class="fld" style="left:868px;top:166px;width:117px;height:28px;background:#3d3d3d"></div>
<div class="a" style="left:891px;top:166px;width:1px;height:28px;background:#686868"></div>
<svg class="a" style="left:873px;top:170.5px" width="12.5" height="7"><path d="M1 6 L6.25 1 L11.5 6" fill="none" stroke="#cfcfcf" stroke-width="1.3"/></svg>
<svg class="a" style="left:873px;top:182.5px" width="12.5" height="7"><path d="M1 1 L6.25 6 L11.5 1" fill="none" stroke="#cfcfcf" stroke-width="1.3"/></svg>
<div class="txt" style="left:897px;top:173.6px;font-size:13px">0 mm</div>
<div class="fld" style="left:1031px;top:166px;width:117px;height:28px;background:#3d3d3d"></div>
<div class="a" style="left:1054px;top:166px;width:1px;height:28px;background:#686868"></div>
<svg class="a" style="left:1036px;top:170.5px" width="12.5" height="7"><path d="M1 6 L6.25 1 L11.5 6" fill="none" stroke="#cfcfcf" stroke-width="1.3"/></svg>
<svg class="a" style="left:1036px;top:182.5px" width="12.5" height="7"><path d="M1 1 L6.25 6 L11.5 1" fill="none" stroke="#cfcfcf" stroke-width="1.3"/></svg>
<div class="txt" style="left:1060px;top:173.6px;font-size:13px">0 mm</div>
<div class="a" style="left:840px;top:202px;width:307px;height:1px;background:#474747"></div><div class="a" style="left:840px;top:203px;width:307px;height:1px;background:#575757"></div>
<div class="fld" style="left:868px;top:209px;width:117px;height:28px;background:#3d3d3d"></div>
<div class="a" style="left:891px;top:209px;width:1px;height:28px;background:#686868"></div>
<svg class="a" style="left:873px;top:213.5px" width="12.5" height="7"><path d="M1 6 L6.25 1 L11.5 6" fill="none" stroke="#cfcfcf" stroke-width="1.3"/></svg>
<svg class="a" style="left:873px;top:225.5px" width="12.5" height="7"><path d="M1 1 L6.25 6 L11.5 1" fill="none" stroke="#cfcfcf" stroke-width="1.3"/></svg>
<div class="txt" style="left:897px;top:216.6px;font-size:13px">0 mm</div>
<div class="fld" style="left:1031px;top:209px;width:117px;height:28px;background:#3d3d3d"></div>
<div class="a" style="left:1054px;top:209px;width:1px;height:28px;background:#686868"></div>
<svg class="a" style="left:1036px;top:213.5px" width="12.5" height="7"><path d="M1 6 L6.25 1 L11.5 6" fill="none" stroke="#cfcfcf" stroke-width="1.3"/></svg>
<svg class="a" style="left:1036px;top:225.5px" width="12.5" height="7"><path d="M1 1 L6.25 6 L11.5 1" fill="none" stroke="#cfcfcf" stroke-width="1.3"/></svg>
<div class="txt" style="left:1060px;top:216.6px;font-size:13px">0 mm</div>
<div class="a" style="left:868px;top:244px;width:24px;height:28px;background:#4c4c4c;border-radius:3px 0 0 3px"></div>
<div class="fld" style="left:891px;top:244px;width:94px;height:28px;background:#3d3d3d"></div>
<svg class="a" style="left:873px;top:248.5px" width="12.5" height="7"><path d="M1 6 L6.25 1 L11.5 6" fill="none" stroke="#9a9a9a" stroke-width="1.3"/></svg>
<svg class="a" style="left:873px;top:260.5px" width="12.5" height="7"><path d="M1 1 L6.25 6 L11.5 1" fill="none" stroke="#9a9a9a" stroke-width="1.3"/></svg>
<div class="a" style="left:960px;top:244px;width:1px;height:28px;background:#686868"></div>
<svg class="a" style="left:966.0px;top:254.5px" width="13" height="7.5"><path d="M1 1 L6.5 6.5 L12 1" fill="none" stroke="#c8c8c8" stroke-width="1.5"/></svg>
<div class="txt" style="left:897px;top:251.6px;font-size:13px">Ignore</div>
<div class="a" style="left:840px;top:279px;width:307px;height:1px;background:#474747"></div><div class="a" style="left:840px;top:280px;width:307px;height:1px;background:#575757"></div>
<div class="fld" style="left:868px;top:287px;width:117px;height:28px;background:#3d3d3d"></div>
<div class="a" style="left:891px;top:287px;width:1px;height:28px;background:#686868"></div>
<svg class="a" style="left:873px;top:291.5px" width="12.5" height="7"><path d="M1 6 L6.25 1 L11.5 6" fill="none" stroke="#cfcfcf" stroke-width="1.3"/></svg>
<svg class="a" style="left:873px;top:303.5px" width="12.5" height="7"><path d="M1 1 L6.25 6 L11.5 1" fill="none" stroke="#cfcfcf" stroke-width="1.3"/></svg>
<div class="txt" style="left:897px;top:294.6px;font-size:13px">0</div>
<div class="fld" style="left:1031px;top:287px;width:117px;height:28px;background:#3d3d3d"></div>
<div class="a" style="left:1054px;top:287px;width:1px;height:28px;background:#686868"></div>
<svg class="a" style="left:1036px;top:291.5px" width="12.5" height="7"><path d="M1 6 L6.25 1 L11.5 6" fill="none" stroke="#cfcfcf" stroke-width="1.3"/></svg>
<svg class="a" style="left:1036px;top:303.5px" width="12.5" height="7"><path d="M1 1 L6.25 6 L11.5 1" fill="none" stroke="#cfcfcf" stroke-width="1.3"/></svg>
<div class="txt" style="left:1060px;top:294.6px;font-size:13px">0</div>
<div class="a" style="left:840px;top:323px;width:307px;height:1px;background:#474747"></div><div class="a" style="left:840px;top:324px;width:307px;height:1px;background:#575757"></div>
<svg class="a" style="left:839.5px;top:140.0px" width="9" height="9"><path d="M0 3.5 L3.5 3.5 L3.5 0.5 L8.5 4.5 L3.5 8.5 L3.5 5.5 L0 5.5 Z" fill="#a9a9a9"/></svg>
<div class="a" style="left:849px;top:134px;width:2px;height:20.5px;background:#a9a9a9"></div>
<div class="a" style="left:852px;top:135.0px;width:6px;height:1.7px;background:#a9a9a9"></div><div class="a" style="left:852px;top:139.1px;width:9px;height:1.7px;background:#a9a9a9"></div><div class="a" style="left:852px;top:143.2px;width:6px;height:1.7px;background:#a9a9a9"></div><div class="a" style="left:852px;top:147.3px;width:9px;height:1.7px;background:#a9a9a9"></div><div class="a" style="left:852px;top:151.4px;width:6px;height:1.7px;background:#a9a9a9"></div>
<svg class="a" style="left:839.5px;top:166.5px" width="9" height="9"><path d="M0 3.5 L3.5 3.5 L3.5 0.5 L8.5 4.5 L3.5 8.5 L3.5 5.5 L0 5.5 Z" fill="#a9a9a9"/></svg>
<div class="a" style="left:853px;top:170.2px;width:7px;height:1.7px;background:#a9a9a9"></div>
<div class="a" style="left:848px;top:174.2px;width:13px;height:1.7px;background:#a9a9a9"></div><div class="a" style="left:848px;top:178.39999999999998px;width:13px;height:1.7px;background:#a9a9a9"></div><div class="a" style="left:848px;top:182.6px;width:13px;height:1.7px;background:#a9a9a9"></div><div class="a" style="left:848px;top:186.79999999999998px;width:13px;height:1.7px;background:#a9a9a9"></div>
<div class="a" style="left:1003px;top:135.0px;width:7px;height:1.7px;background:#a9a9a9"></div><div class="a" style="left:1003px;top:139.1px;width:9px;height:1.7px;background:#a9a9a9"></div><div class="a" style="left:1003px;top:143.2px;width:7px;height:1.7px;background:#a9a9a9"></div><div class="a" style="left:1003px;top:147.3px;width:9px;height:1.7px;background:#a9a9a9"></div><div class="a" style="left:1003px;top:151.4px;width:7px;height:1.7px;background:#a9a9a9"></div>
<div class="a" style="left:1013px;top:134px;width:2px;height:20.5px;background:#a9a9a9"></div>
<svg class="a" style="left:1016px;top:140.0px" width="9" height="9"><path d="M9 3.5 L5.5 3.5 L5.5 0.5 L0.5 4.5 L5.5 8.5 L5.5 5.5 L9 5.5 Z" fill="#a9a9a9"/></svg>
<div class="a" style="left:1003px;top:170.2px;width:13px;height:1.7px;background:#a9a9a9"></div><div class="a" style="left:1003px;top:174.39999999999998px;width:13px;height:1.7px;background:#a9a9a9"></div><div class="a" style="left:1003px;top:178.6px;width:13px;height:1.7px;background:#a9a9a9"></div><div class="a" style="left:1003px;top:182.79999999999998px;width:13px;height:1.7px;background:#a9a9a9"></div><div class="a" style="left:1003px;top:187.0px;width:6.5px;height:1.7px;background:#a9a9a9"></div>
<svg class="a" style="left:1016px;top:183.0px" width="9" height="9"><path d="M9 3.5 L5.5 3.5 L5.5 0.5 L0.5 4.5 L5.5 8.5 L5.5 5.5 L9 5.5 Z" fill="#a9a9a9"/></svg>
<svg class="a" style="left:839.5px;top:213.0px" width="9" height="9"><path d="M0 3.5 L3.5 3.5 L3.5 0.5 L8.5 4.5 L3.5 8.5 L3.5 5.5 L0 5.5 Z" fill="#a9a9a9"/></svg>
<div class="a" style="left:849.5px;top:213px;width:12px;height:8px;border:1.7px solid #a9a9a9;background:#3a3a3a"></div>
<div class="a" style="left:849.5px;top:223.5px;width:11px;height:1.7px;background:#a9a9a9"></div><div class="a" style="left:849.5px;top:227.5px;width:12px;height:1.7px;background:#a9a9a9"></div><div class="a" style="left:849.5px;top:231.5px;width:11px;height:1.7px;background:#a9a9a9"></div>
<div class="a" style="left:1004px;top:213px;width:11px;height:1.7px;background:#a9a9a9"></div><div class="a" style="left:1004px;top:217px;width:12px;height:1.7px;background:#a9a9a9"></div><div class="a" style="left:1004px;top:221px;width:11px;height:1.7px;background:#a9a9a9"></div>
<svg class="a" style="left:1001.5px;top:224.5px" width="9" height="9"><path d="M0 3.5 L3.5 3.5 L3.5 0.5 L8.5 4.5 L3.5 8.5 L3.5 5.5 L0 5.5 Z" fill="#a9a9a9"/></svg>
<div class="a" style="left:1011.5px;top:225px;width:12px;height:8px;border:1.7px solid #a9a9a9;background:#3a3a3a"></div>
<div class="a" style="left:849.5px;top:248px;width:11px;height:1.7px;background:#a9a9a9"></div><div class="a" style="left:849.5px;top:252px;width:12px;height:1.7px;background:#a9a9a9"></div>
<svg class="a" style="left:839.5px;top:253.5px" width="9" height="9"><path d="M0 3.5 L3.5 3.5 L3.5 0.5 L8.5 4.5 L3.5 8.5 L3.5 5.5 L0 5.5 Z" fill="#a9a9a9"/></svg>
<div class="a" style="left:849.5px;top:254px;width:12px;height:8px;border:1.7px solid #a9a9a9;background:#3a3a3a"></div>
<div class="a" style="left:849.5px;top:264.5px;width:12px;height:1.7px;background:#a9a9a9"></div>
<div class="txt" style="left:845px;top:290.5px;font-size:14px;color:#a9a9a9;-webkit-text-stroke:0.4px #a9a9a9">A</div>
<svg class="a" style="left:839px;top:291px" width="5" height="13"><path d="M2.5 1 L2.5 12 M0.5 3 L2.5 0.5 L4.5 3 M0.5 10 L2.5 12.5 L4.5 10" fill="none" stroke="#a9a9a9" stroke-width="1.5"/></svg>
<div class="a" style="left:855px;top:291.0px;width:6px;height:1.7px;background:#a9a9a9"></div><div class="a" style="left:855px;top:294.3px;width:6px;height:1.7px;background:#a9a9a9"></div><div class="a" style="left:855px;top:297.6px;width:6px;height:1.7px;background:#a9a9a9"></div>
<div class="a" style="left:845px;top:302.5px;width:16px;height:1.7px;background:#a9a9a9"></div><div class="a" style="left:845px;top:306.5px;width:16px;height:1.7px;background:#a9a9a9"></div>
<div class="txt" style="left:1002px;top:290.5px;font-size:14px;color:#a9a9a9;-webkit-text-stroke:0.4px #a9a9a9;letter-spacing:-1px">A+</div>
<div class="a" style="left:1018px;top:291.0px;width:6px;height:1.7px;background:#a9a9a9"></div><div class="a" style="left:1018px;top:294.3px;width:6px;height:1.7px;background:#a9a9a9"></div><div class="a" style="left:1018px;top:297.6px;width:6px;height:1.7px;background:#a9a9a9"></div>
<div class="a" style="left:1002px;top:302.5px;width:22px;height:1.7px;background:#a9a9a9"></div><div class="a" style="left:1002px;top:306.5px;width:22px;height:1.7px;background:#a9a9a9"></div>
<div class="a" style="left:840px;top:344px;width:16px;height:16px;border:1.5px solid #a9a9a9;border-radius:3px"></div>
<div class="txt" style="left:864px;top:346.2px;font-size:13px;color:#e3e3e3">Shading</div>
<div class="a" style="left:840px;top:388px;width:16px;height:16px;border:1.5px solid #a9a9a9;border-radius:3px"></div>
<div class="txt" style="left:864px;top:390.2px;font-size:13px;color:#e3e3e3">Border</div>
<div class="a" style="left:840px;top:427px;width:307px;height:1px;background:#474747"></div><div class="a" style="left:840px;top:428px;width:307px;height:1px;background:#575757"></div>
<div class="a" style="left:840px;top:442px;width:16px;height:16px;border:1.5px solid #a9a9a9;border-radius:3px"></div>
<div class="txt" style="left:864px;top:444.5px;font-size:13px;color:#e3e3e3">Hyphenate</div>
<svg class="a" style="left:1004px;top:341.5px" width="22" height="22"><rect x="0" y="0" width="22" height="22" rx="1.5" fill="#c9c9c9"/><rect x="2.0" y="2.0" width="5.4" height="5.4" fill="#3c3c3c"/><rect x="8.3" y="2.0" width="5.4" height="5.4" fill="#8c8c8c"/><rect x="14.6" y="2.0" width="5.4" height="5.4" fill="#6a6a6a"/><rect x="2.0" y="8.3" width="5.4" height="5.4" fill="#7c7c7c"/><rect x="8.3" y="8.3" width="5.4" height="5.4" fill="#4a4a4a"/><rect x="14.6" y="8.3" width="5.4" height="5.4" fill="#c4c4c4"/><rect x="2.0" y="14.6" width="5.4" height="5.4" fill="#c4c4c4"/><rect x="8.3" y="14.6" width="5.4" height="5.4" fill="#5a5a5a"/><rect x="14.6" y="14.6" width="5.4" height="5.4" fill="#2c2c2c"/></svg>
<div class="a" style="left:1004px;top:385.5px;width:22px;height:23px;border:1.6px solid #bdbdbd;border-radius:2px;background:#4e4e4e;box-shadow:inset 0 0 0 1px #3a3a3a"></div>
<svg class="a" style="left:1004px;top:385.5px" width="22" height="23"><path d="M13 5.5 H9.8 A3.6 3.6 0 0 0 9.8 12.7 H11.5 V18 M12.5 5.5 V18" fill="#c9c9c9" stroke="#c9c9c9" stroke-width="0"/><circle cx="10" cy="9.1" r="3.6" fill="#c9c9c9"/><rect x="11.2" y="5.5" width="1.8" height="12.5" fill="#c9c9c9"/><rect x="14.6" y="5.5" width="1.8" height="12.5" fill="#c9c9c9"/><rect x="10" y="5.5" width="6.4" height="1.6" fill="#c9c9c9"/></svg>
<div class="a" style="left:1029px;top:340px;width:94px;height:26px;background:#e1e1e1"></div>
<div class="a" style="left:1035px;top:345.5px;width:16px;height:15.5px;background:#000"></div>
<div class="txt" style="left:1055px;top:347.5px;font-size:13px;color:#1a1a1a">[Black]</div>
<div class="fld" style="left:1123px;top:340px;width:25px;height:26px;border-radius:0 3px 3px 0"></div>
<svg class="a" style="left:1129px;top:349.5px" width="13" height="7.5"><path d="M1 1 L6.5 6.5 L12 1" fill="none" stroke="#c8c8c8" stroke-width="1.5"/></svg>
<div class="a" style="left:1029px;top:384px;width:94px;height:26px;background:#e1e1e1"></div>
<div class="a" style="left:1035px;top:389.5px;width:16px;height:15.5px;background:#000"></div>
<div class="txt" style="left:1055px;top:391.5px;font-size:13px;color:#1a1a1a">[Black]</div>
<div class="fld" style="left:1123px;top:384px;width:25px;height:26px;border-radius:0 3px 3px 0"></div>
<svg class="a" style="left:1129px;top:393.5px" width="13" height="7.5"><path d="M1 1 L6.5 6.5 L12 1" fill="none" stroke="#c8c8c8" stroke-width="1.5"/></svg>
<div class="a" style="left:1081px;top:435px;width:29px;height:30px;background:#2c2c2c;border-radius:4px"></div>
<div class="a" style="left:1086px;top:442.0px;width:7px;height:2px;background:#c9c9c9"></div><div class="a" style="left:1086px;top:445.5px;width:7px;height:2px;background:#c9c9c9"></div><div class="a" style="left:1086px;top:449.0px;width:7px;height:2px;background:#c9c9c9"></div>
<div class="a" style="left:1096px;top:447.0px;width:8px;height:2px;background:#c9c9c9"></div><div class="a" style="left:1096px;top:450.5px;width:8px;height:2px;background:#c9c9c9"></div><div class="a" style="left:1096px;top:454.0px;width:8px;height:2px;background:#c9c9c9"></div>
<div class="a" style="left:1122.5px;top:445px;width:8px;height:11px;background:#8a8a8a"></div>
<div class="a" style="left:1133px;top:445px;width:8px;height:11px;background:#8a8a8a"></div>
<div class="a" style="left:1156px;top:94px;width:10px;height:363px;background:#585858"></div>
<div class="a" style="left:1166px;top:94px;width:325px;height:364px;background:#535353;border:1px solid #333"></div>
<div class="a" style="left:1167px;top:95px;width:323px;height:5px;background:#393939"></div>
<div class="a" style="left:1167px;top:100px;width:323px;height:36px;background:#414141;border-bottom:1px solid #393939"></div>
<div class="a" style="left:1212px;top:100px;width:104px;height:36px;background:#535353"></div>
<div class="a" style="left:1211px;top:100px;width:1px;height:36px;background:#3a3a3a"></div>
<div class="a" style="left:1315px;top:100px;width:1px;height:36px;background:#3a3a3a"></div>
<div class="a" style="left:1359px;top:100px;width:1px;height:36px;background:#3a3a3a"></div>
<div class="a" style="left:1403px;top:100px;width:1px;height:36px;background:#3a3a3a"></div>
<div class="a" style="left:1167px;top:100px;width:44px;height:36px;overflow:hidden"><div class="txt" style="left:16.5px;top:12.3px;font-size:14.5px;font-weight:bold;color:#b9b9b9;letter-spacing:0">Stroke</div></div>
<svg class="a" style="left:1220.5px;top:112.5px" width="8" height="13"><path d="M1 5 L4 1.5 L7 5 M1 8 L4 11.5 L7 8" fill="none" stroke="#bdbdbd" stroke-width="1.4"/></svg>
<div class="txt" style="left:1234px;top:111.6px;font-size:14.5px;font-weight:bold;color:#ececec">Swatches</div>
<div class="a" style="left:1316px;top:100px;width:43px;height:36px;overflow:hidden"><div class="txt" style="left:15px;top:12.3px;font-size:14.5px;font-weight:bold;color:#b9b9b9;letter-spacing:0">Gradient</div></div>
<div class="a" style="left:1360px;top:100px;width:43px;height:36px;overflow:hidden"><div class="txt" style="left:15px;top:12.3px;font-size:14.5px;font-weight:bold;color:#b9b9b9;letter-spacing:-0.3px">CC Libraries</div></div>
<svg class="a" style="left:1436px;top:113px" width="12" height="9"><path d="M1 1 L4.5 4.5 L1 8 M6.5 1 L10 4.5 L6.5 8" fill="none" stroke="#e0e0e0" stroke-width="1.8"/></svg>
<div class="a" style="left:1458px;top:111px;width:1.5px;height:14px;background:#a0a0a0"></div>
<div class="a" style="left:1469px;top:113px;width:14px;height:1.6px;background:#bdbdbd"></div><div class="a" style="left:1469px;top:116px;width:14px;height:1.6px;background:#bdbdbd"></div><div class="a" style="left:1469px;top:119px;width:14px;height:1.6px;background:#bdbdbd"></div><div class="a" style="left:1469px;top:122px;width:14px;height:1.6px;background:#bdbdbd"></div>
<div class="a" style="left:1190px;top:160px;width:23.5px;height:23.5px;background:#f2f2f2;border:1px solid #2a2a2a"></div>
<div class="txt" style="left:1200px;top:170px;font-family:'Liberation Serif',serif;font-size:13px;color:#b8b8b8;-webkit-text-stroke:0">T</div>
<svg class="a" style="left:1190px;top:160px" width="24" height="24"><line x1="2" y1="22.5" x2="23" y2="1.5" stroke="#d42525" stroke-width="3"/></svg>
<div class="a" style="left:1176px;top:146.5px;width:27px;height:26.5px;background:#f4f4f4;border:1px solid #2a2a2a"></div>
<svg class="a" style="left:1179px;top:149.7px" width="20" height="22"><path d="M0.5 0.5 H19 V7.5 H17.2 Q16.6 4.8 14 4.6 H12.2 V18.2 H15.2 V21 H4.3 V18.2 H7.3 V4.6 H5.5 Q2.9 4.8 2.3 7.5 H0.5 Z" fill="#1c3b94"/></svg>
<svg class="a" style="left:1206px;top:147.5px" width="9" height="8"><path d="M1 2 Q5.5 1 6.3 5.5 M4.3 4.3 L6.3 6.8 L8.3 4.3" fill="none" stroke="#cfcfcf" stroke-width="1.3"/></svg>
<div class="a" style="left:1236px;top:158px;width:11px;height:11px;border:1.3px solid #707070"></div>
<div class="a" style="left:1256.5px;top:151px;width:25px;height:25px;background:#2d2d2d;border-radius:4px"></div>
<div class="txt" style="left:1262px;top:155px;font-family:'Liberation Serif',serif;font-size:18px;font-weight:bold;color:#dcdcdc">T</div>
<div class="txt" style="left:1332px;top:159px;font-size:13px;color:#e3e3e3">Tint:</div>
<div class="fld" style="left:1366.5px;top:150px;width:71px;height:27.5px"></div>
<div class="a" style="left:1413px;top:150px;width:1px;height:27.5px;background:#686868"></div>
<div class="txt" style="left:1372px;top:158px;font-size:13px;color:#e6e6e6">100</div>
<svg class="a" style="left:1421px;top:157.5px" width="7" height="12"><path d="M1 1 L5.5 6 L1 11" fill="none" stroke="#cfcfcf" stroke-width="1.4"/></svg>
<div class="txt" style="left:1440px;top:159px;font-size:13px;color:#e3e3e3">%</div>
<div class="a" style="left:1167px;top:190px;width:323px;height:1px;background:#5e5e5e"></div>
<div class="a" style="left:1473px;top:191px;width:16px;height:220px;background:#4e4e4e"></div>
<svg class="a" style="left:1474.5px;top:195.5px" width="12" height="6"><path d="M1 5 L6.0 1 L11 5" fill="none" stroke="#6c6c6c" stroke-width="1.3"/></svg>
<div class="a" style="left:1474.5px;top:263px;width:13.5px;height:132px;background:#5f5f5f;border-radius:7px"></div>
<svg class="a" style="left:1474.5px;top:400px" width="12" height="6"><path d="M1 1 L6.0 5 L11 1" fill="none" stroke="#6c6c6c" stroke-width="1.3"/></svg>
<div class="a" style="left:1167px;top:191px;width:306px;height:12px;overflow:hidden">
<div class="a" style="left:26px;top:-16px;width:17px;height:22px;background:#f4f4f4;border:1.5px solid #1e1e1e"></div>
<div class="txt" style="left:52.5px;top:-8px;font-size:13px;color:#e0e0e0">[Paper]</div>
</div>
<div class="a" style="left:1167px;top:202.6px;width:306px;height:1px;background:#5c5c5c"></div>
<div class="a" style="left:1193px;top:209.4px;width:17px;height:16.5px;background:#000000;border:1px solid #262626"></div>
<div class="txt" style="left:1220px;top:211.9px;font-size:13px;">[Black]</div>
<svg class="a" style="left:1416.5px;top:210px" width="15" height="15"><rect x="0" y="0" width="15" height="15" fill="#e4e4e4"/><circle cx="1.80" cy="1.80" r="0.95" fill="#4a4a4a"/><circle cx="5.60" cy="1.80" r="0.95" fill="#4a4a4a"/><circle cx="9.40" cy="1.80" r="0.95" fill="#4a4a4a"/><circle cx="13.20" cy="1.80" r="0.95" fill="#4a4a4a"/><circle cx="3.70" cy="3.70" r="0.95" fill="#4a4a4a"/><circle cx="7.50" cy="3.70" r="0.95" fill="#4a4a4a"/><circle cx="11.30" cy="3.70" r="0.95" fill="#4a4a4a"/><circle cx="1.80" cy="5.60" r="0.95" fill="#4a4a4a"/><circle cx="5.60" cy="5.60" r="0.95" fill="#4a4a4a"/><circle cx="9.40" cy="5.60" r="0.95" fill="#4a4a4a"/><circle cx="13.20" cy="5.60" r="0.95" fill="#4a4a4a"/><circle cx="3.70" cy="7.50" r="0.95" fill="#4a4a4a"/><circle cx="7.50" cy="7.50" r="0.95" fill="#4a4a4a"/><circle cx="11.30" cy="7.50" r="0.95" fill="#4a4a4a"/><circle cx="1.80" cy="9.40" r="0.95" fill="#4a4a4a"/><circle cx="5.60" cy="9.40" r="0.95" fill="#4a4a4a"/><circle cx="9.40" cy="9.40" r="0.95" fill="#4a4a4a"/><circle cx="13.20" cy="9.40" r="0.95" fill="#4a4a4a"/><circle cx="3.70" cy="11.30" r="0.95" fill="#4a4a4a"/><circle cx="7.50" cy="11.30" r="0.95" fill="#4a4a4a"/><circle cx="11.30" cy="11.30" r="0.95" fill="#4a4a4a"/><circle cx="1.80" cy="13.20" r="0.95" fill="#4a4a4a"/><circle cx="5.60" cy="13.20" r="0.95" fill="#4a4a4a"/><circle cx="9.40" cy="13.20" r="0.95" fill="#4a4a4a"/><circle cx="13.20" cy="13.20" r="0.95" fill="#4a4a4a"/></svg>
<svg class="a" style="left:1438.5px;top:210px" width="14" height="14"><polygon points="0,0 14,0 7,7" fill="#ec1bd6"/><polygon points="14,0 14,14 7,7" fill="#f2e51c"/><polygon points="0,14 14,14 7,7" fill="#000"/><polygon points="0,0 0,14 7,7" fill="#1ed8e8"/></svg>
<div class="a" style="left:1167px;top:232.3px;width:306px;height:1px;background:#5c5c5c"></div>
<div class="a" style="left:1193px;top:239.1px;width:17px;height:16.5px;background:#0aa2e0;border:1px solid #262626"></div>
<div class="txt" style="left:1220px;top:241.6px;font-size:13px;">C=100 M=0 Y=0 K=0</div>
<svg class="a" style="left:1416.5px;top:240px" width="15" height="15"><rect x="0" y="0" width="15" height="15" fill="#e4e4e4"/><circle cx="1.80" cy="1.80" r="0.95" fill="#4a4a4a"/><circle cx="5.60" cy="1.80" r="0.95" fill="#4a4a4a"/><circle cx="9.40" cy="1.80" r="0.95" fill="#4a4a4a"/><circle cx="13.20" cy="1.80" r="0.95" fill="#4a4a4a"/><circle cx="3.70" cy="3.70" r="0.95" fill="#4a4a4a"/><circle cx="7.50" cy="3.70" r="0.95" fill="#4a4a4a"/><circle cx="11.30" cy="3.70" r="0.95" fill="#4a4a4a"/><circle cx="1.80" cy="5.60" r="0.95" fill="#4a4a4a"/><circle cx="5.60" cy="5.60" r="0.95" fill="#4a4a4a"/><circle cx="9.40" cy="5.60" r="0.95" fill="#4a4a4a"/><circle cx="13.20" cy="5.60" r="0.95" fill="#4a4a4a"/><circle cx="3.70" cy="7.50" r="0.95" fill="#4a4a4a"/><circle cx="7.50" cy="7.50" r="0.95" fill="#4a4a4a"/><circle cx="11.30" cy="7.50" r="0.95" fill="#4a4a4a"/><circle cx="1.80" cy="9.40" r="0.95" fill="#4a4a4a"/><circle cx="5.60" cy="9.40" r="0.95" fill="#4a4a4a"/><circle cx="9.40" cy="9.40" r="0.95" fill="#4a4a4a"/><circle cx="13.20" cy="9.40" r="0.95" fill="#4a4a4a"/><circle cx="3.70" cy="11.30" r="0.95" fill="#4a4a4a"/><circle cx="7.50" cy="11.30" r="0.95" fill="#4a4a4a"/><circle cx="11.30" cy="11.30" r="0.95" fill="#4a4a4a"/><circle cx="1.80" cy="13.20" r="0.95" fill="#4a4a4a"/><circle cx="5.60" cy="13.20" r="0.95" fill="#4a4a4a"/><circle cx="9.40" cy="13.20" r="0.95" fill="#4a4a4a"/><circle cx="13.20" cy="13.20" r="0.95" fill="#4a4a4a"/></svg>
<svg class="a" style="left:1438.5px;top:240px" width="14" height="14"><polygon points="0,0 14,0 7,7" fill="#ec1bd6"/><polygon points="14,0 14,14 7,7" fill="#f2e51c"/><polygon points="0,14 14,14 7,7" fill="#000"/><polygon points="0,0 0,14 7,7" fill="#1ed8e8"/></svg>
<div class="a" style="left:1167px;top:262.0px;width:306px;height:1px;background:#5c5c5c"></div>
<div class="a" style="left:1193px;top:268.8px;width:17px;height:16.5px;background:#e2007a;border:1px solid #262626"></div>
<div class="txt" style="left:1220px;top:271.3px;font-size:13px;">C=0 M=100 Y=0 K=0</div>
<svg class="a" style="left:1416.5px;top:270px" width="15" height="15"><rect x="0" y="0" width="15" height="15" fill="#e4e4e4"/><circle cx="1.80" cy="1.80" r="0.95" fill="#4a4a4a"/><circle cx="5.60" cy="1.80" r="0.95" fill="#4a4a4a"/><circle cx="9.40" cy="1.80" r="0.95" fill="#4a4a4a"/><circle cx="13.20" cy="1.80" r="0.95" fill="#4a4a4a"/><circle cx="3.70" cy="3.70" r="0.95" fill="#4a4a4a"/><circle cx="7.50" cy="3.70" r="0.95" fill="#4a4a4a"/><circle cx="11.30" cy="3.70" r="0.95" fill="#4a4a4a"/><circle cx="1.80" cy="5.60" r="0.95" fill="#4a4a4a"/><circle cx="5.60" cy="5.60" r="0.95" fill="#4a4a4a"/><circle cx="9.40" cy="5.60" r="0.95" fill="#4a4a4a"/><circle cx="13.20" cy="5.60" r="0.95" fill="#4a4a4a"/><circle cx="3.70" cy="7.50" r="0.95" fill="#4a4a4a"/><circle cx="7.50" cy="7.50" r="0.95" fill="#4a4a4a"/><circle cx="11.30" cy="7.50" r="0.95" fill="#4a4a4a"/><circle cx="1.80" cy="9.40" r="0.95" fill="#4a4a4a"/><circle cx="5.60" cy="9.40" r="0.95" fill="#4a4a4a"/><circle cx="9.40" cy="9.40" r="0.95" fill="#4a4a4a"/><circle cx="13.20" cy="9.40" r="0.95" fill="#4a4a4a"/><circle cx="3.70" cy="11.30" r="0.95" fill="#4a4a4a"/><circle cx="7.50" cy="11.30" r="0.95" fill="#4a4a4a"/><circle cx="11.30" cy="11.30" r="0.95" fill="#4a4a4a"/><circle cx="1.80" cy="13.20" r="0.95" fill="#4a4a4a"/><circle cx="5.60" cy="13.20" r="0.95" fill="#4a4a4a"/><circle cx="9.40" cy="13.20" r="0.95" fill="#4a4a4a"/><circle cx="13.20" cy="13.20" r="0.95" fill="#4a4a4a"/></svg>
<svg class="a" style="left:1438.5px;top:270px" width="14" height="14"><polygon points="0,0 14,0 7,7" fill="#ec1bd6"/><polygon points="14,0 14,14 7,7" fill="#f2e51c"/><polygon points="0,14 14,14 7,7" fill="#000"/><polygon points="0,0 0,14 7,7" fill="#1ed8e8"/></svg>
<div class="a" style="left:1167px;top:291.7px;width:306px;height:1px;background:#5c5c5c"></div>
<div class="a" style="left:1193px;top:298.5px;width:17px;height:16.5px;background:#fde800;border:1px solid #262626"></div>
<div class="txt" style="left:1220px;top:301.0px;font-size:13px;">C=0 M=0 Y=100 K=0</div>
<svg class="a" style="left:1416.5px;top:299px" width="15" height="15"><rect x="0" y="0" width="15" height="15" fill="#e4e4e4"/><circle cx="1.80" cy="1.80" r="0.95" fill="#4a4a4a"/><circle cx="5.60" cy="1.80" r="0.95" fill="#4a4a4a"/><circle cx="9.40" cy="1.80" r="0.95" fill="#4a4a4a"/><circle cx="13.20" cy="1.80" r="0.95" fill="#4a4a4a"/><circle cx="3.70" cy="3.70" r="0.95" fill="#4a4a4a"/><circle cx="7.50" cy="3.70" r="0.95" fill="#4a4a4a"/><circle cx="11.30" cy="3.70" r="0.95" fill="#4a4a4a"/><circle cx="1.80" cy="5.60" r="0.95" fill="#4a4a4a"/><circle cx="5.60" cy="5.60" r="0.95" fill="#4a4a4a"/><circle cx="9.40" cy="5.60" r="0.95" fill="#4a4a4a"/><circle cx="13.20" cy="5.60" r="0.95" fill="#4a4a4a"/><circle cx="3.70" cy="7.50" r="0.95" fill="#4a4a4a"/><circle cx="7.50" cy="7.50" r="0.95" fill="#4a4a4a"/><circle cx="11.30" cy="7.50" r="0.95" fill="#4a4a4a"/><circle cx="1.80" cy="9.40" r="0.95" fill="#4a4a4a"/><circle cx="5.60" cy="9.40" r="0.95" fill="#4a4a4a"/><circle cx="9.40" cy="9.40" r="0.95" fill="#4a4a4a"/><circle cx="13.20" cy="9.40" r="0.95" fill="#4a4a4a"/><circle cx="3.70" cy="11.30" r="0.95" fill="#4a4a4a"/><circle cx="7.50" cy="11.30" r="0.95" fill="#4a4a4a"/><circle cx="11.30" cy="11.30" r="0.95" fill="#4a4a4a"/><circle cx="1.80" cy="13.20" r="0.95" fill="#4a4a4a"/><circle cx="5.60" cy="13.20" r="0.95" fill="#4a4a4a"/><circle cx="9.40" cy="13.20" r="0.95" fill="#4a4a4a"/><circle cx="13.20" cy="13.20" r="0.95" fill="#4a4a4a"/></svg>
<svg class="a" style="left:1438.5px;top:299px" width="14" height="14"><polygon points="0,0 14,0 7,7" fill="#ec1bd6"/><polygon points="14,0 14,14 7,7" fill="#f2e51c"/><polygon points="0,14 14,14 7,7" fill="#000"/><polygon points="0,0 0,14 7,7" fill="#1ed8e8"/></svg>
<div class="a" style="left:1167px;top:321.4px;width:306px;height:1px;background:#5c5c5c"></div>
<div class="a" style="left:1193px;top:328.2px;width:17px;height:16.5px;background:#d7282f;border:1px solid #262626"></div>
<div class="txt" style="left:1220px;top:330.7px;font-size:13px;">C=15 M=100 Y=100 K=0</div>
<svg class="a" style="left:1416.5px;top:329px" width="15" height="15"><rect x="0" y="0" width="15" height="15" fill="#e4e4e4"/><circle cx="1.80" cy="1.80" r="0.95" fill="#4a4a4a"/><circle cx="5.60" cy="1.80" r="0.95" fill="#4a4a4a"/><circle cx="9.40" cy="1.80" r="0.95" fill="#4a4a4a"/><circle cx="13.20" cy="1.80" r="0.95" fill="#4a4a4a"/><circle cx="3.70" cy="3.70" r="0.95" fill="#4a4a4a"/><circle cx="7.50" cy="3.70" r="0.95" fill="#4a4a4a"/><circle cx="11.30" cy="3.70" r="0.95" fill="#4a4a4a"/><circle cx="1.80" cy="5.60" r="0.95" fill="#4a4a4a"/><circle cx="5.60" cy="5.60" r="0.95" fill="#4a4a4a"/><circle cx="9.40" cy="5.60" r="0.95" fill="#4a4a4a"/><circle cx="13.20" cy="5.60" r="0.95" fill="#4a4a4a"/><circle cx="3.70" cy="7.50" r="0.95" fill="#4a4a4a"/><circle cx="7.50" cy="7.50" r="0.95" fill="#4a4a4a"/><circle cx="11.30" cy="7.50" r="0.95" fill="#4a4a4a"/><circle cx="1.80" cy="9.40" r="0.95" fill="#4a4a4a"/><circle cx="5.60" cy="9.40" r="0.95" fill="#4a4a4a"/><circle cx="9.40" cy="9.40" r="0.95" fill="#4a4a4a"/><circle cx="13.20" cy="9.40" r="0.95" fill="#4a4a4a"/><circle cx="3.70" cy="11.30" r="0.95" fill="#4a4a4a"/><circle cx="7.50" cy="11.30" r="0.95" fill="#4a4a4a"/><circle cx="11.30" cy="11.30" r="0.95" fill="#4a4a4a"/><circle cx="1.80" cy="13.20" r="0.95" fill="#4a4a4a"/><circle cx="5.60" cy="13.20" r="0.95" fill="#4a4a4a"/><circle cx="9.40" cy="13.20" r="0.95" fill="#4a4a4a"/><circle cx="13.20" cy="13.20" r="0.95" fill="#4a4a4a"/></svg>
<svg class="a" style="left:1438.5px;top:329px" width="14" height="14"><polygon points="0,0 14,0 7,7" fill="#ec1bd6"/><polygon points="14,0 14,14 7,7" fill="#f2e51c"/><polygon points="0,14 14,14 7,7" fill="#000"/><polygon points="0,0 0,14 7,7" fill="#1ed8e8"/></svg>
<div class="a" style="left:1167px;top:351.1px;width:306px;height:1px;background:#5c5c5c"></div>
<div class="a" style="left:1193px;top:357.9px;width:17px;height:16.5px;background:#3aaa3a;border:1px solid #262626"></div>
<div class="txt" style="left:1220px;top:360.4px;font-size:13px;">C=75 M=5 Y=100 K=0</div>
<svg class="a" style="left:1416.5px;top:359px" width="15" height="15"><rect x="0" y="0" width="15" height="15" fill="#e4e4e4"/><circle cx="1.80" cy="1.80" r="0.95" fill="#4a4a4a"/><circle cx="5.60" cy="1.80" r="0.95" fill="#4a4a4a"/><circle cx="9.40" cy="1.80" r="0.95" fill="#4a4a4a"/><circle cx="13.20" cy="1.80" r="0.95" fill="#4a4a4a"/><circle cx="3.70" cy="3.70" r="0.95" fill="#4a4a4a"/><circle cx="7.50" cy="3.70" r="0.95" fill="#4a4a4a"/><circle cx="11.30" cy="3.70" r="0.95" fill="#4a4a4a"/><circle cx="1.80" cy="5.60" r="0.95" fill="#4a4a4a"/><circle cx="5.60" cy="5.60" r="0.95" fill="#4a4a4a"/><circle cx="9.40" cy="5.60" r="0.95" fill="#4a4a4a"/><circle cx="13.20" cy="5.60" r="0.95" fill="#4a4a4a"/><circle cx="3.70" cy="7.50" r="0.95" fill="#4a4a4a"/><circle cx="7.50" cy="7.50" r="0.95" fill="#4a4a4a"/><circle cx="11.30" cy="7.50" r="0.95" fill="#4a4a4a"/><circle cx="1.80" cy="9.40" r="0.95" fill="#4a4a4a"/><circle cx="5.60" cy="9.40" r="0.95" fill="#4a4a4a"/><circle cx="9.40" cy="9.40" r="0.95" fill="#4a4a4a"/><circle cx="13.20" cy="9.40" r="0.95" fill="#4a4a4a"/><circle cx="3.70" cy="11.30" r="0.95" fill="#4a4a4a"/><circle cx="7.50" cy="11.30" r="0.95" fill="#4a4a4a"/><circle cx="11.30" cy="11.30" r="0.95" fill="#4a4a4a"/><circle cx="1.80" cy="13.20" r="0.95" fill="#4a4a4a"/><circle cx="5.60" cy="13.20" r="0.95" fill="#4a4a4a"/><circle cx="9.40" cy="13.20" r="0.95" fill="#4a4a4a"/><circle cx="13.20" cy="13.20" r="0.95" fill="#4a4a4a"/></svg>
<svg class="a" style="left:1438.5px;top:359px" width="14" height="14"><polygon points="0,0 14,0 7,7" fill="#ec1bd6"/><polygon points="14,0 14,14 7,7" fill="#f2e51c"/><polygon points="0,14 14,14 7,7" fill="#000"/><polygon points="0,0 0,14 7,7" fill="#1ed8e8"/></svg>
<div class="a" style="left:1167px;top:381.3px;width:306px;height:29.5px;background:#4a6484"></div>
<div class="a" style="left:1167px;top:380.8px;width:306px;height:1px;background:#5c5c5c"></div>
<div class="a" style="left:1193px;top:387.6px;width:17px;height:16.5px;background:#243a96;border:1px solid #262626"></div>
<div class="txt" style="left:1220px;top:390.1px;font-size:13px;font-weight:bold;color:#f2f2f2;font-size:13.5px;letter-spacing:0.75px;">C=100 M=90 Y=10 K=0</div>
<svg class="a" style="left:1416.5px;top:388px" width="15" height="15"><rect x="0" y="0" width="15" height="15" fill="#e4e4e4"/><circle cx="1.80" cy="1.80" r="0.95" fill="#4a4a4a"/><circle cx="5.60" cy="1.80" r="0.95" fill="#4a4a4a"/><circle cx="9.40" cy="1.80" r="0.95" fill="#4a4a4a"/><circle cx="13.20" cy="1.80" r="0.95" fill="#4a4a4a"/><circle cx="3.70" cy="3.70" r="0.95" fill="#4a4a4a"/><circle cx="7.50" cy="3.70" r="0.95" fill="#4a4a4a"/><circle cx="11.30" cy="3.70" r="0.95" fill="#4a4a4a"/><circle cx="1.80" cy="5.60" r="0.95" fill="#4a4a4a"/><circle cx="5.60" cy="5.60" r="0.95" fill="#4a4a4a"/><circle cx="9.40" cy="5.60" r="0.95" fill="#4a4a4a"/><circle cx="13.20" cy="5.60" r="0.95" fill="#4a4a4a"/><circle cx="3.70" cy="7.50" r="0.95" fill="#4a4a4a"/><circle cx="7.50" cy="7.50" r="0.95" fill="#4a4a4a"/><circle cx="11.30" cy="7.50" r="0.95" fill="#4a4a4a"/><circle cx="1.80" cy="9.40" r="0.95" fill="#4a4a4a"/><circle cx="5.60" cy="9.40" r="0.95" fill="#4a4a4a"/><circle cx="9.40" cy="9.40" r="0.95" fill="#4a4a4a"/><circle cx="13.20" cy="9.40" r="0.95" fill="#4a4a4a"/><circle cx="3.70" cy="11.30" r="0.95" fill="#4a4a4a"/><circle cx="7.50" cy="11.30" r="0.95" fill="#4a4a4a"/><circle cx="11.30" cy="11.30" r="0.95" fill="#4a4a4a"/><circle cx="1.80" cy="13.20" r="0.95" fill="#4a4a4a"/><circle cx="5.60" cy="13.20" r="0.95" fill="#4a4a4a"/><circle cx="9.40" cy="13.20" r="0.95" fill="#4a4a4a"/><circle cx="13.20" cy="13.20" r="0.95" fill="#4a4a4a"/></svg>
<svg class="a" style="left:1438.5px;top:388px" width="14" height="14"><polygon points="0,0 14,0 7,7" fill="#ec1bd6"/><polygon points="14,0 14,14 7,7" fill="#f2e51c"/><polygon points="0,14 14,14 7,7" fill="#000"/><polygon points="0,0 0,14 7,7" fill="#1ed8e8"/></svg>
<svg class="a" style="left:1394px;top:209px" width="17" height="17"><path d="M2 1.5 L15.5 15" stroke="#c4c4c4" stroke-width="1.6" stroke-linecap="round"/><path d="M12.5 1.5 L15.8 4.6 L6 14.2 L1.6 15.6 L2.8 11.2 Z" fill="#c4c4c4"/></svg>
<svg class="a" style="left:1176px;top:421px" width="19" height="19"><path d="M3 1.5 H16.5 V17 H9" fill="none" stroke="#cfcfcf" stroke-width="2"/><path d="M3 1.5 V7" fill="none" stroke="#cfcfcf" stroke-width="2"/><path d="M0.5 11 H5 V7.5 L10 12 L5 16.5 V13 H0.5 Z" fill="#d0d0d0"/><rect x="9" y="4" width="4" height="6" fill="#cfcfcf"/></svg>
<svg class="a" style="left:1328.5px;top:422px" width="22" height="17"><rect x="0" y="0" width="14" height="14.5" fill="#cfcfcf"/><circle cx="3.5" cy="3.5" r="1.5" fill="#444"/><circle cx="10.5" cy="3.5" r="1.5" fill="#444"/><circle cx="7" cy="7" r="1.5" fill="#444"/><circle cx="3.5" cy="10.5" r="1.2" fill="#777"/><circle cx="10.5" cy="10.5" r="1.5" fill="#444"/><polygon points="16.5,13 21,13 18.75,16" fill="#cfcfcf"/></svg>
<svg class="a" style="left:1366.5px;top:423px" width="18" height="14"><path d="M0.5 0.5 H7 L8.5 2.5 H17.5 V13.5 H0.5 Z" fill="#cfcfcf"/><path d="M1.5 4 H17" stroke="#888" stroke-width="0.8"/></svg>
<div class="a" style="left:1407px;top:422px;width:15.5px;height:16px;border:1.8px solid #cfcfcf"></div>
<svg class="a" style="left:1409px;top:424px" width="12" height="12"><path d="M6 2.5 V9.5 M2.5 6 H9.5" stroke="#cfcfcf" stroke-width="1.6"/></svg>
<svg class="a" style="left:1443px;top:422px" width="16" height="17"><path d="M1 3 H15 M5 3 V1 H11 V3" fill="none" stroke="#cfcfcf" stroke-width="1.6"/><path d="M2.5 4 V16 H13.5 V4" fill="none" stroke="#cfcfcf" stroke-width="1.6"/><path d="M5.5 5.5 V14 M8 5.5 V14 M10.5 5.5 V14" stroke="#cfcfcf" stroke-width="1.3"/></svg>
<div class="a" style="left:1167px;top:446px;width:323px;height:2px;background:#333"></div>
<div class="a" style="left:1167px;top:448px;width:323px;height:9px;background:#4e4e4e"></div>
<div class="a" style="left:1314px;top:449.5px;width:1.5px;height:5px;background:#3a3a3a"></div><div class="a" style="left:1317px;top:449.5px;width:1.5px;height:5px;background:#3a3a3a"></div><div class="a" style="left:1320px;top:449.5px;width:1.5px;height:5px;background:#3a3a3a"></div><div class="a" style="left:1323px;top:449.5px;width:1.5px;height:5px;background:#3a3a3a"></div><div class="a" style="left:1326px;top:449.5px;width:1.5px;height:5px;background:#3a3a3a"></div><div class="a" style="left:1329px;top:449.5px;width:1.5px;height:5px;background:#3a3a3a"></div><div class="a" style="left:1332px;top:449.5px;width:1.5px;height:5px;background:#3a3a3a"></div><div class="a" style="left:1335px;top:449.5px;width:1.5px;height:5px;background:#3a3a3a"></div><div class="a" style="left:1338px;top:449.5px;width:1.5px;height:5px;background:#3a3a3a"></div><div class="a" style="left:1341px;top:449.5px;width:1.5px;height:5px;background:#3a3a3a"></div>
<div class="a" style="left:864px;top:557px;width:326px;height:320px;background:#535353;border:1px solid #333;border-radius:5px 5px 0 0"></div>
<div class="a" style="left:865px;top:558px;width:324px;height:17px;background:#3b3b3b;border-radius:4px 4px 0 0"></div>
<div class="a" style="left:865px;top:575px;width:324px;height:36.5px;background:#414141;border-bottom:1px solid #393939"></div>
<div class="a" style="left:865px;top:575px;width:108px;height:37px;background:#535353"></div>
<svg class="a" style="left:1148px;top:563.5px" width="11" height="8"><path d="M4.8 1.2 L1.6 4 L4.8 6.8 M9.8 1.2 L6.6 4 L9.8 6.8" fill="none" stroke="#bcbcbc" stroke-width="2"/></svg><svg class="a" style="left:1173px;top:562.5px" width="10" height="10"><path d="M1.2 1.2 L8.8 8.8 M8.8 1.2 L1.2 8.8" fill="none" stroke="#bcbcbc" stroke-width="2.2"/></svg>
<svg class="a" style="left:875.5px;top:589px" width="8" height="13"><path d="M1 5 L4 1.5 L7 5 M1 8 L4 11.5 L7 8" fill="none" stroke="#bdbdbd" stroke-width="1.4"/></svg>
<div class="txt" style="left:889.5px;top:587.3px;font-size:14.5px;letter-spacing:0.2px;font-weight:bold;color:#ececec">Character</div>
<div class="a" style="left:1167px;top:589px;width:14px;height:1.6px;background:#bdbdbd"></div><div class="a" style="left:1167px;top:592px;width:14px;height:1.6px;background:#bdbdbd"></div><div class="a" style="left:1167px;top:595px;width:14px;height:1.6px;background:#bdbdbd"></div><div class="a" style="left:1167px;top:598px;width:14px;height:1.6px;background:#bdbdbd"></div>
<div class="fld" style="left:872.5px;top:621px;width:309.0px;height:26px;background:#3d3d3d"></div>
<div class="a" style="left:1157px;top:621px;width:1px;height:26px;background:#686868"></div>
<svg class="a" style="left:1162.75px;top:630.5px" width="13" height="7.5"><path d="M1 1 L6.5 6.5 L12 1" fill="none" stroke="#c8c8c8" stroke-width="1.5"/></svg>
<div class="txt" style="left:904.5px;top:627.6px;font-size:13px">Minion Pro</div>
<svg class="a" style="left:874px;top:627px" width="26" height="15"><circle cx="6" cy="5.5" r="4.5" fill="none" stroke="#cfcfcf" stroke-width="1.5"/><path d="M9.2 8.8 L14 13.5" stroke="#cfcfcf" stroke-width="1.8"/><path d="M16.5 5 L20.5 9 L24.5 5" fill="none" stroke="#cfcfcf" stroke-width="1.4"/></svg>
<div class="fld" style="left:872.5px;top:656px;width:309.0px;height:26.5px;background:#3d3d3d"></div>
<div class="a" style="left:1157px;top:656px;width:1px;height:26.5px;background:#686868"></div>
<svg class="a" style="left:1162.75px;top:665.75px" width="13" height="7.5"><path d="M1 1 L6.5 6.5 L12 1" fill="none" stroke="#c8c8c8" stroke-width="1.5"/></svg>
<div class="txt" style="left:878px;top:662.8px;font-size:13px">Bold Cond</div>
<div class="fld" style="left:902.5px;top:698.5px;width:116.0px;height:27.5px;background:#3d3d3d"></div>
<div class="a" style="left:925.5px;top:698.5px;width:1px;height:27.5px;background:#686868"></div>
<svg class="a" style="left:907.5px;top:702.75px" width="12.5" height="7"><path d="M1 6 L6.25 1 L11.5 6" fill="none" stroke="#cfcfcf" stroke-width="1.3"/></svg>
<svg class="a" style="left:907.5px;top:714.75px" width="12.5" height="7"><path d="M1 1 L6.25 6 L11.5 1" fill="none" stroke="#cfcfcf" stroke-width="1.3"/></svg>
<div class="a" style="left:993.5px;top:698.5px;width:1px;height:27.5px;background:#686868"></div>
<svg class="a" style="left:999.5px;top:708.75px" width="13" height="7.5"><path d="M1 1 L6.5 6.5 L12 1" fill="none" stroke="#c8c8c8" stroke-width="1.5"/></svg>
<div class="txt" style="left:931.5px;top:705.8px;font-size:13px">15 pt</div>
<div class="fld" style="left:1065px;top:698.5px;width:116.5px;height:27.5px;background:#3d3d3d"></div>
<div class="a" style="left:1088px;top:698.5px;width:1px;height:27.5px;background:#686868"></div>
<svg class="a" style="left:1070px;top:702.75px" width="12.5" height="7"><path d="M1 6 L6.25 1 L11.5 6" fill="none" stroke="#cfcfcf" stroke-width="1.3"/></svg>
<svg class="a" style="left:1070px;top:714.75px" width="12.5" height="7"><path d="M1 1 L6.25 6 L11.5 1" fill="none" stroke="#cfcfcf" stroke-width="1.3"/></svg>
<div class="a" style="left:1157px;top:698.5px;width:1px;height:27.5px;background:#686868"></div>
<svg class="a" style="left:1162.75px;top:708.75px" width="13" height="7.5"><path d="M1 1 L6.5 6.5 L12 1" fill="none" stroke="#c8c8c8" stroke-width="1.5"/></svg>
<div class="txt" style="left:1094px;top:705.8px;font-size:13px">(18 pt)</div>
<div class="a" style="left:902.5px;top:734px;width:24px;height:27px;background:#4c4c4c;border-radius:3px 0 0 3px"></div>
<div class="fld" style="left:925.5px;top:734px;width:93.0px;height:27px;background:#3d3d3d"></div>
<svg class="a" style="left:907.5px;top:738.0px" width="12.5" height="7"><path d="M1 6 L6.25 1 L11.5 6" fill="none" stroke="#9a9a9a" stroke-width="1.3"/></svg>
<svg class="a" style="left:907.5px;top:750.0px" width="12.5" height="7"><path d="M1 1 L6.25 6 L11.5 1" fill="none" stroke="#9a9a9a" stroke-width="1.3"/></svg>
<div class="a" style="left:993.5px;top:734px;width:1px;height:27px;background:#686868"></div>
<svg class="a" style="left:999.5px;top:744.0px" width="13" height="7.5"><path d="M1 1 L6.5 6.5 L12 1" fill="none" stroke="#c8c8c8" stroke-width="1.5"/></svg>
<div class="txt" style="left:931.5px;top:741.1px;font-size:13px">Metrics</div>
<div class="fld" style="left:1065px;top:734px;width:116.5px;height:27px;background:#3d3d3d"></div>
<div class="a" style="left:1088px;top:734px;width:1px;height:27px;background:#686868"></div>
<svg class="a" style="left:1070px;top:738.0px" width="12.5" height="7"><path d="M1 6 L6.25 1 L11.5 6" fill="none" stroke="#cfcfcf" stroke-width="1.3"/></svg>
<svg class="a" style="left:1070px;top:750.0px" width="12.5" height="7"><path d="M1 1 L6.25 6 L11.5 1" fill="none" stroke="#cfcfcf" stroke-width="1.3"/></svg>
<div class="a" style="left:1157px;top:734px;width:1px;height:27px;background:#686868"></div>
<svg class="a" style="left:1162.75px;top:744.0px" width="13" height="7.5"><path d="M1 1 L6.5 6.5 L12 1" fill="none" stroke="#c8c8c8" stroke-width="1.5"/></svg>
<div class="txt" style="left:1094px;top:741.1px;font-size:13px">0</div>
<div class="a" style="left:874px;top:768px;width:306px;height:1px;background:#474747"></div><div class="a" style="left:874px;top:769px;width:306px;height:1px;background:#575757"></div>
<div class="fld" style="left:902.5px;top:777.5px;width:116.0px;height:27.0px;background:#3d3d3d"></div>
<div class="a" style="left:925.5px;top:777.5px;width:1px;height:27.0px;background:#686868"></div>
<svg class="a" style="left:907.5px;top:781.5px" width="12.5" height="7"><path d="M1 6 L6.25 1 L11.5 6" fill="none" stroke="#cfcfcf" stroke-width="1.3"/></svg>
<svg class="a" style="left:907.5px;top:793.5px" width="12.5" height="7"><path d="M1 1 L6.25 6 L11.5 1" fill="none" stroke="#cfcfcf" stroke-width="1.3"/></svg>
<div class="a" style="left:993.5px;top:777.5px;width:1px;height:27.0px;background:#686868"></div>
<svg class="a" style="left:999.5px;top:787.5px" width="13" height="7.5"><path d="M1 1 L6.5 6.5 L12 1" fill="none" stroke="#c8c8c8" stroke-width="1.5"/></svg>
<div class="txt" style="left:931.5px;top:784.6px;font-size:13px">100%</div>
<div class="fld" style="left:1065px;top:777.5px;width:116.5px;height:27.0px;background:#3d3d3d"></div>
<div class="a" style="left:1088px;top:777.5px;width:1px;height:27.0px;background:#686868"></div>
<svg class="a" style="left:1070px;top:781.5px" width="12.5" height="7"><path d="M1 6 L6.25 1 L11.5 6" fill="none" stroke="#cfcfcf" stroke-width="1.3"/></svg>
<svg class="a" style="left:1070px;top:793.5px" width="12.5" height="7"><path d="M1 1 L6.25 6 L11.5 1" fill="none" stroke="#cfcfcf" stroke-width="1.3"/></svg>
<div class="a" style="left:1157px;top:777.5px;width:1px;height:27.0px;background:#686868"></div>
<svg class="a" style="left:1162.75px;top:787.5px" width="13" height="7.5"><path d="M1 1 L6.5 6.5 L12 1" fill="none" stroke="#c8c8c8" stroke-width="1.5"/></svg>
<div class="txt" style="left:1094px;top:784.6px;font-size:13px">100%</div>
<div class="fld" style="left:902.5px;top:812.5px;width:116.0px;height:27.0px;background:#3d3d3d"></div>
<div class="a" style="left:925.5px;top:812.5px;width:1px;height:27.0px;background:#686868"></div>
<svg class="a" style="left:907.5px;top:816.5px" width="12.5" height="7"><path d="M1 6 L6.25 1 L11.5 6" fill="none" stroke="#cfcfcf" stroke-width="1.3"/></svg>
<svg class="a" style="left:907.5px;top:828.5px" width="12.5" height="7"><path d="M1 1 L6.25 6 L11.5 1" fill="none" stroke="#cfcfcf" stroke-width="1.3"/></svg>
<div class="txt" style="left:931.5px;top:819.6px;font-size:13px">0 pt</div>
<div class="fld" style="left:1065px;top:812.5px;width:116.5px;height:27.0px;background:#3d3d3d"></div>
<div class="a" style="left:1088px;top:812.5px;width:1px;height:27.0px;background:#686868"></div>
<svg class="a" style="left:1070px;top:816.5px" width="12.5" height="7"><path d="M1 6 L6.25 1 L11.5 6" fill="none" stroke="#cfcfcf" stroke-width="1.3"/></svg>
<svg class="a" style="left:1070px;top:828.5px" width="12.5" height="7"><path d="M1 1 L6.25 6 L11.5 1" fill="none" stroke="#cfcfcf" stroke-width="1.3"/></svg>
<div class="txt" style="left:1094px;top:819.6px;font-size:13px">0&#176;</div>
<div class="a" style="left:874px;top:847px;width:306px;height:1px;background:#474747"></div><div class="a" style="left:874px;top:848px;width:306px;height:1px;background:#575757"></div>
<div class="fld" style="left:980.5px;top:855px;width:171px;height:30px"></div>
<div class="txt" style="left:872px;top:708px;font-family:'Liberation Serif',serif;font-size:15px;font-weight:bold;color:#c4c4c4">T</div>
<div class="txt" style="left:879px;top:700px;font-family:'Liberation Serif',serif;font-size:26px;font-weight:bold;color:#c4c4c4">T</div>
<div class="txt" style="left:1040px;top:700px;font-family:'Liberation Serif',serif;font-size:12px;font-weight:bold;color:#c4c4c4">A</div>
<div class="txt" style="left:1040px;top:711.5px;font-family:'Liberation Serif',serif;font-size:12px;font-weight:bold;color:#c4c4c4">A</div>
<div class="a" style="left:1038px;top:710.5px;width:20px;height:1.3px;background:#c4c4c4"></div>
<svg class="a" style="left:1035px;top:708px" width="5" height="16"><path d="M2.5 1 V15 M0.5 3.5 L2.5 1 L4.5 3.5 M0.5 12.5 L2.5 15 L4.5 12.5" fill="none" stroke="#c4c4c4" stroke-width="1.3"/></svg>
<div class="txt" style="left:872px;top:740px;font-size:15px;color:#c4c4c4;letter-spacing:-2px">V/A</div>
<svg class="a" style="left:881px;top:753px" width="15" height="8"><path d="M14 4 H2 M5 1 L1.5 4 L5 7" fill="none" stroke="#c4c4c4" stroke-width="1.4"/></svg>
<div class="a" style="left:1035px;top:736px;width:24px;height:15px;background:#c4c4c4"></div>
<div class="txt" style="left:1036px;top:737.5px;font-size:14px;font-weight:bold;color:#535353;letter-spacing:-1.5px">VA</div>
<svg class="a" style="left:1035px;top:752px" width="24" height="9"><path d="M2 4.5 H22 M5 1.5 L1.5 4.5 L5 7.5 M19 1.5 L22.5 4.5 L19 7.5" fill="none" stroke="#c4c4c4" stroke-width="1.4"/></svg>
<svg class="a" style="left:871px;top:779px" width="7" height="22"><path d="M3.5 1 V21 M0.8 4 L3.5 1 L6.2 4 M0.8 18 L3.5 21 L6.2 18" fill="none" stroke="#c4c4c4" stroke-width="1.5"/></svg>
<div class="txt" style="left:877px;top:779px;font-family:'Liberation Serif',serif;font-size:27px;font-weight:bold;color:#c4c4c4">T</div>
<div class="txt" style="left:1036px;top:777px;font-family:'Liberation Serif',serif;font-size:24px;font-weight:bold;color:#c4c4c4">T</div>
<svg class="a" style="left:1034px;top:793px" width="25" height="10"><path d="M2 5 H23 M5 2 L1.5 5 L5 8 M20 2 L23.5 5 L20 8" fill="none" stroke="#c4c4c4" stroke-width="1.5"/></svg>
<div class="txt" style="left:872px;top:817px;font-size:17px;color:#c4c4c4">A</div>
<div class="txt" style="left:884px;top:814px;font-size:11px;color:#c4c4c4">a</div>
<svg class="a" style="left:885px;top:826px" width="9" height="12"><path d="M4.5 11 V1.5 M1 5 L4.5 1.5 L8 5" fill="none" stroke="#c4c4c4" stroke-width="1.5"/></svg>
<div class="txt" style="left:1038px;top:813px;font-family:'Liberation Serif',serif;font-size:26px;font-style:italic;font-weight:bold;color:#c4c4c4">T</div>
<div class="txt" style="left:904px;top:862.5px;font-size:13px;color:#d8d8d8">La</div>
<div class="txt" style="left:986px;top:862.5px;font-size:13px;color:#e6e6e6">English: USA</div>
</body></html>
